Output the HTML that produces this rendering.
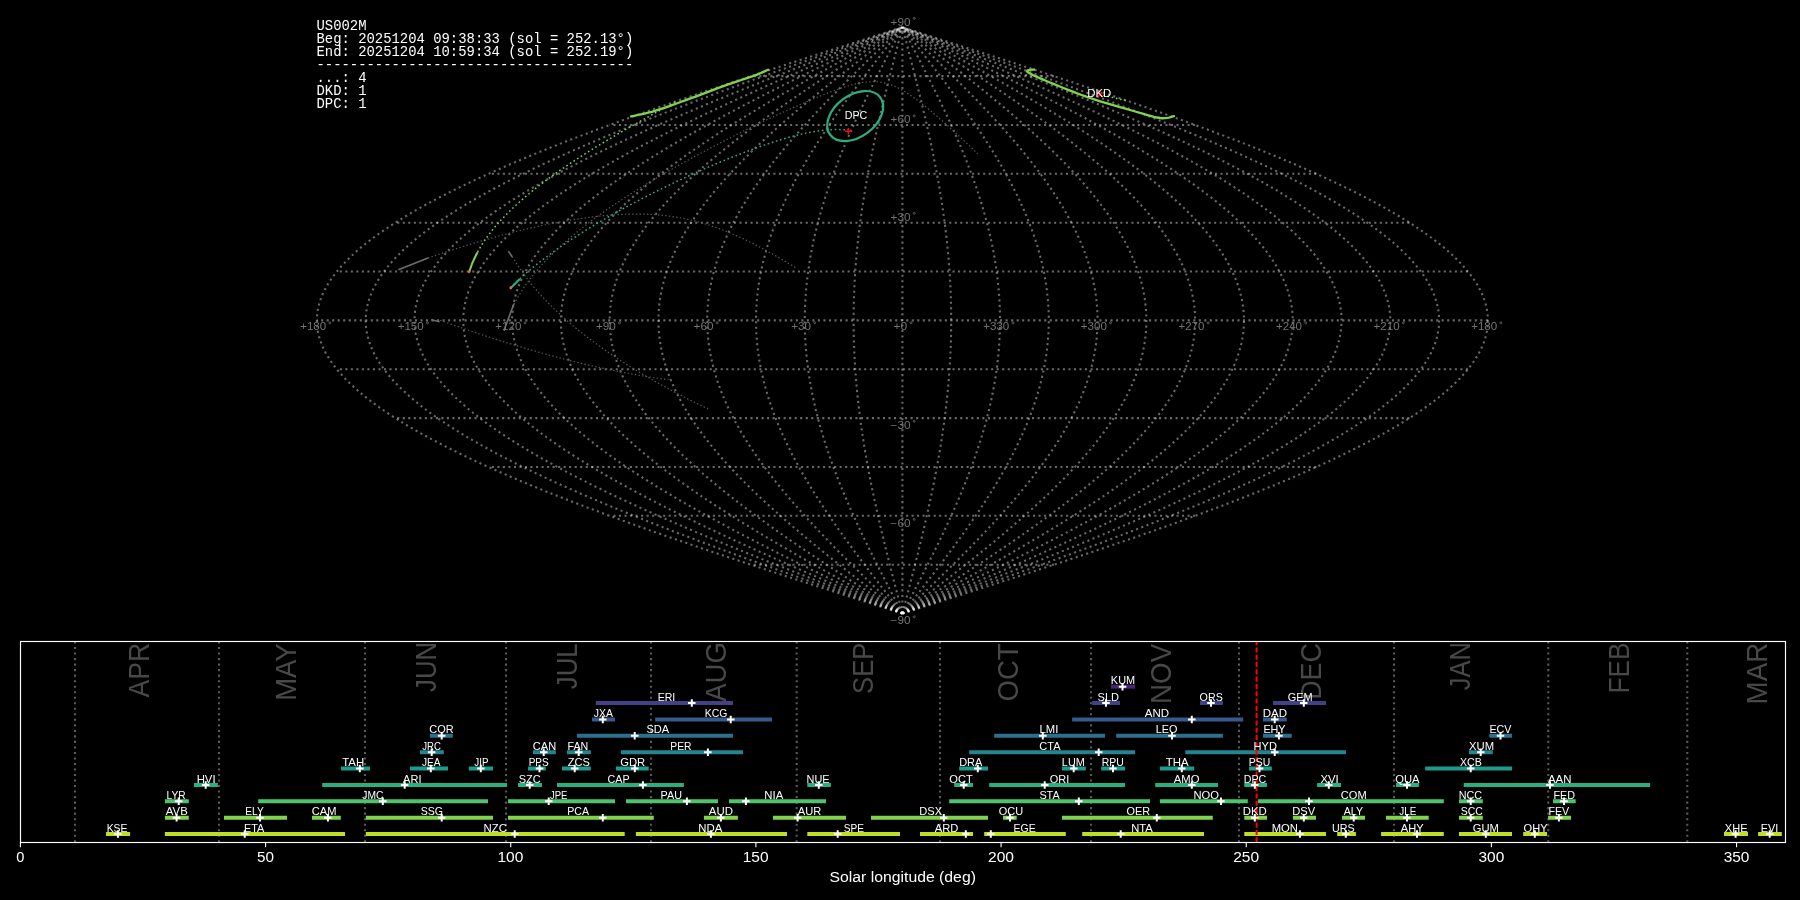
<!DOCTYPE html><html><head><meta charset="utf-8"><style>html,body{margin:0;padding:0;background:#000;width:1800px;height:900px;overflow:hidden}svg{display:block;will-change:transform}text{font-family:"Liberation Sans",sans-serif}</style></head><body>
<svg width="1800" height="900" viewBox="0 0 1800 900">
<rect width="1800" height="900" fill="#000"/>
<g fill="none" stroke="#fff" stroke-opacity="0.41" stroke-width="2.08" stroke-dasharray="2.08 3.44"><path d="M902.4 613.53L912.62 610.27L922.83 607.02L933.04 603.76L943.24 600.5L953.43 597.25L963.6 593.99L973.75 590.73L983.89 587.47L993.99 584.22L1004.07 580.96L1014.12 577.7L1024.13 574.45L1034.11 571.19L1044.05 567.93L1053.94 564.67L1063.79 561.42L1073.58 558.16L1083.33 554.9L1093.02 551.65L1102.65 548.39L1112.23 545.13L1121.73 541.88L1131.17 538.62L1140.55 535.36L1149.84 532.11L1159.07 528.85L1168.21 525.59L1177.28 522.33L1186.26 519.08L1195.15 515.82L1203.96 512.56L1212.67 509.31L1221.29 506.05L1229.81 502.79L1238.23 499.53L1246.55 496.28L1254.77 493.02L1262.87 489.76L1270.87 486.51L1278.75 483.25L1286.53 479.99L1294.18 476.74L1301.71 473.48L1309.13 470.22L1316.41 466.96L1323.58 463.71L1330.61 460.45L1337.51 457.19L1344.29 453.94L1350.92 450.68L1357.42 447.42L1363.78 444.17L1370 440.91L1376.08 437.65L1382.02 434.39L1387.8 431.14L1393.44 427.88L1398.94 424.62L1404.27 421.37L1409.46 418.11L1414.49 414.85L1419.37 411.6L1424.09 408.34L1428.65 405.08L1433.05 401.82L1437.28 398.57L1441.36 395.31L1445.27 392.05L1449.02 388.8L1452.59 385.54L1456 382.28L1459.25 379.03L1462.32 375.77L1465.22 372.51L1467.95 369.25L1470.51 366L1472.9 362.74L1475.11 359.48L1477.15 356.23L1479.01 352.97L1480.7 349.71L1482.21 346.46L1483.54 343.2L1484.7 339.94L1485.68 336.69L1486.48 333.43L1487.1 330.17L1487.55 326.91L1487.81 323.66L1487.9 320.4L1487.81 317.14L1487.55 313.89L1487.1 310.63L1486.48 307.37L1485.68 304.11L1484.7 300.86L1483.54 297.6L1482.21 294.34L1480.7 291.09L1479.01 287.83L1477.15 284.57L1475.11 281.32L1472.9 278.06L1470.51 274.8L1467.95 271.54L1465.22 268.29L1462.32 265.03L1459.25 261.77L1456 258.52L1452.59 255.26L1449.02 252L1445.27 248.75L1441.36 245.49L1437.28 242.23L1433.05 238.97L1428.65 235.72L1424.09 232.46L1419.37 229.2L1414.49 225.95L1409.46 222.69L1404.27 219.43L1398.94 216.18L1393.44 212.92L1387.8 209.66L1382.02 206.4L1376.08 203.15L1370 199.89L1363.78 196.63L1357.42 193.38L1350.92 190.12L1344.29 186.86L1337.51 183.61L1330.61 180.35L1323.58 177.09L1316.41 173.83L1309.13 170.58L1301.71 167.32L1294.18 164.06L1286.53 160.81L1278.75 157.55L1270.87 154.29L1262.87 151.04L1254.77 147.78L1246.55 144.52L1238.23 141.26L1229.81 138.01L1221.29 134.75L1212.67 131.49L1203.96 128.24L1195.15 124.98L1186.26 121.72L1177.28 118.47L1168.21 115.21L1159.07 111.95L1149.84 108.69L1140.55 105.44L1131.17 102.18L1121.73 98.92L1112.23 95.67L1102.65 92.41L1093.02 89.15L1083.33 85.9L1073.58 82.64L1063.79 79.38L1053.94 76.12L1044.05 72.87L1034.11 69.61L1024.13 66.35L1014.12 63.1L1004.07 59.84L993.99 56.58L983.89 53.33L973.75 50.07L963.6 46.81L953.43 43.55L943.24 40.3L933.04 37.04L922.83 33.78L912.62 30.53L902.4 27.27"/><path d="M902.4 613.53L911.77 610.27L921.13 607.02L930.49 603.76L939.84 600.5L949.18 597.25L958.5 593.99L967.81 590.73L977.1 587.47L986.36 584.22L995.6 580.96L1004.81 577.7L1013.99 574.45L1023.13 571.19L1032.24 567.93L1041.31 564.67L1050.34 561.42L1059.32 558.16L1068.25 554.9L1077.14 551.65L1085.97 548.39L1094.74 545.13L1103.46 541.88L1112.11 538.62L1120.7 535.36L1129.22 532.11L1137.68 528.85L1146.06 525.59L1154.37 522.33L1162.6 519.08L1170.76 515.82L1178.83 512.56L1186.81 509.31L1194.71 506.05L1202.53 502.79L1210.25 499.53L1217.87 496.28L1225.4 493.02L1232.83 489.76L1240.16 486.51L1247.39 483.25L1254.51 479.99L1261.53 476.74L1268.44 473.48L1275.23 470.22L1281.91 466.96L1288.48 463.71L1294.93 460.45L1301.25 457.19L1307.46 453.94L1313.55 450.68L1319.5 447.42L1325.33 444.17L1331.04 440.91L1336.61 437.65L1342.05 434.39L1347.35 431.14L1352.52 427.88L1357.56 424.62L1362.45 421.37L1367.21 418.11L1371.82 414.85L1376.29 411.6L1380.61 408.34L1384.79 405.08L1388.83 401.82L1392.71 398.57L1396.45 395.31L1400.03 392.05L1403.46 388.8L1406.74 385.54L1409.87 382.28L1412.84 379.03L1415.66 375.77L1418.32 372.51L1420.82 369.25L1423.17 366L1425.36 362.74L1427.38 359.48L1429.25 356.23L1430.96 352.97L1432.5 349.71L1433.89 346.46L1435.11 343.2L1436.17 339.94L1437.07 336.69L1437.8 333.43L1438.38 330.17L1438.79 326.91L1439.03 323.66L1439.11 320.4L1439.03 317.14L1438.79 313.89L1438.38 310.63L1437.8 307.37L1437.07 304.11L1436.17 300.86L1435.11 297.6L1433.89 294.34L1432.5 291.09L1430.96 287.83L1429.25 284.57L1427.38 281.32L1425.36 278.06L1423.17 274.8L1420.82 271.54L1418.32 268.29L1415.66 265.03L1412.84 261.77L1409.87 258.52L1406.74 255.26L1403.46 252L1400.03 248.75L1396.45 245.49L1392.71 242.23L1388.83 238.97L1384.79 235.72L1380.61 232.46L1376.29 229.2L1371.82 225.95L1367.21 222.69L1362.45 219.43L1357.56 216.18L1352.52 212.92L1347.35 209.66L1342.05 206.4L1336.61 203.15L1331.04 199.89L1325.33 196.63L1319.5 193.38L1313.55 190.12L1307.46 186.86L1301.25 183.61L1294.93 180.35L1288.48 177.09L1281.91 173.83L1275.23 170.58L1268.44 167.32L1261.53 164.06L1254.51 160.81L1247.39 157.55L1240.16 154.29L1232.83 151.04L1225.4 147.78L1217.87 144.52L1210.25 141.26L1202.53 138.01L1194.71 134.75L1186.81 131.49L1178.83 128.24L1170.76 124.98L1162.6 121.72L1154.37 118.47L1146.06 115.21L1137.68 111.95L1129.22 108.69L1120.7 105.44L1112.11 102.18L1103.46 98.92L1094.74 95.67L1085.97 92.41L1077.14 89.15L1068.25 85.9L1059.32 82.64L1050.34 79.38L1041.31 76.12L1032.24 72.87L1023.13 69.61L1013.99 66.35L1004.81 63.1L995.6 59.84L986.36 56.58L977.1 53.33L967.81 50.07L958.5 46.81L949.18 43.55L939.84 40.3L930.49 37.04L921.13 33.78L911.77 30.53L902.4 27.27"/><path d="M902.4 613.53L910.92 610.27L919.43 607.02L927.94 603.76L936.44 600.5L944.93 597.25L953.4 593.99L961.86 590.73L970.31 587.47L978.73 584.22L987.13 580.96L995.5 577.7L1003.84 574.45L1012.16 571.19L1020.44 567.93L1028.68 564.67L1036.89 561.42L1045.05 558.16L1053.18 554.9L1061.25 551.65L1069.28 548.39L1077.25 545.13L1085.18 541.88L1093.05 538.62L1100.85 535.36L1108.6 532.11L1116.29 528.85L1123.91 525.59L1131.46 522.33L1138.95 519.08L1146.36 515.82L1153.7 512.56L1160.96 509.31L1168.14 506.05L1175.24 502.79L1182.26 499.53L1189.19 496.28L1196.04 493.02L1202.79 489.76L1209.46 486.51L1216.03 483.25L1222.5 479.99L1228.88 476.74L1235.16 473.48L1241.34 470.22L1247.41 466.96L1253.38 463.71L1259.24 460.45L1265 457.19L1270.64 453.94L1276.17 450.68L1281.59 447.42L1286.89 444.17L1292.07 440.91L1297.14 437.65L1302.08 434.39L1306.9 431.14L1311.6 427.88L1316.18 424.62L1320.63 421.37L1324.95 418.11L1329.14 414.85L1333.21 411.6L1337.14 408.34L1340.94 405.08L1344.61 401.82L1348.14 398.57L1351.53 395.31L1354.79 392.05L1357.91 388.8L1360.89 385.54L1363.74 382.28L1366.44 379.03L1369 375.77L1371.42 372.51L1373.69 369.25L1375.83 366L1377.81 362.74L1379.66 359.48L1381.36 356.23L1382.91 352.97L1384.31 349.71L1385.57 346.46L1386.68 343.2L1387.65 339.94L1388.46 336.69L1389.13 333.43L1389.65 330.17L1390.02 326.91L1390.25 323.66L1390.32 320.4L1390.25 317.14L1390.02 313.89L1389.65 310.63L1389.13 307.37L1388.46 304.11L1387.65 300.86L1386.68 297.6L1385.57 294.34L1384.31 291.09L1382.91 287.83L1381.36 284.57L1379.66 281.32L1377.81 278.06L1375.83 274.8L1373.69 271.54L1371.42 268.29L1369 265.03L1366.44 261.77L1363.74 258.52L1360.89 255.26L1357.91 252L1354.79 248.75L1351.53 245.49L1348.14 242.23L1344.61 238.97L1340.94 235.72L1337.14 232.46L1333.21 229.2L1329.14 225.95L1324.95 222.69L1320.63 219.43L1316.18 216.18L1311.6 212.92L1306.9 209.66L1302.08 206.4L1297.14 203.15L1292.07 199.89L1286.89 196.63L1281.59 193.38L1276.17 190.12L1270.64 186.86L1265 183.61L1259.24 180.35L1253.38 177.09L1247.41 173.83L1241.34 170.58L1235.16 167.32L1228.88 164.06L1222.5 160.81L1216.03 157.55L1209.46 154.29L1202.79 151.04L1196.04 147.78L1189.19 144.52L1182.26 141.26L1175.24 138.01L1168.14 134.75L1160.96 131.49L1153.7 128.24L1146.36 124.98L1138.95 121.72L1131.46 118.47L1123.91 115.21L1116.29 111.95L1108.6 108.69L1100.85 105.44L1093.05 102.18L1085.18 98.92L1077.25 95.67L1069.28 92.41L1061.25 89.15L1053.18 85.9L1045.05 82.64L1036.89 79.38L1028.68 76.12L1020.44 72.87L1012.16 69.61L1003.84 66.35L995.5 63.1L987.13 59.84L978.73 56.58L970.31 53.33L961.86 50.07L953.4 46.81L944.93 43.55L936.44 40.3L927.94 37.04L919.43 33.78L910.92 30.53L902.4 27.27"/><path d="M902.4 613.53L910.06 610.27L917.73 607.02L925.38 603.76L933.03 600.5L940.67 597.25L948.3 593.99L955.92 590.73L963.51 587.47L971.09 584.22L978.65 580.96L986.19 577.7L993.7 574.45L1001.18 571.19L1008.63 567.93L1016.05 564.67L1023.44 561.42L1030.79 558.16L1038.1 554.9L1045.37 551.65L1052.59 548.39L1059.77 545.13L1066.9 541.88L1073.98 538.62L1081.01 535.36L1087.98 532.11L1094.9 528.85L1101.76 525.59L1108.56 522.33L1115.29 519.08L1121.96 515.82L1128.57 512.56L1135.1 509.31L1141.57 506.05L1147.96 502.79L1154.27 499.53L1160.51 496.28L1166.67 493.02L1172.75 489.76L1178.75 486.51L1184.67 483.25L1190.49 479.99L1196.23 476.74L1201.88 473.48L1207.44 470.22L1212.91 466.96L1218.28 463.71L1223.56 460.45L1228.74 457.19L1233.81 453.94L1238.79 450.68L1243.67 447.42L1248.44 444.17L1253.1 440.91L1257.66 437.65L1262.11 434.39L1266.45 431.14L1270.68 427.88L1274.8 424.62L1278.81 421.37L1282.7 418.11L1286.47 414.85L1290.13 411.6L1293.67 408.34L1297.09 405.08L1300.39 401.82L1303.56 398.57L1306.62 395.31L1309.55 392.05L1312.36 388.8L1315.05 385.54L1317.6 382.28L1320.04 379.03L1322.34 375.77L1324.52 372.51L1326.57 369.25L1328.48 366L1330.27 362.74L1331.93 359.48L1333.46 356.23L1334.86 352.97L1336.12 349.71L1337.25 346.46L1338.25 343.2L1339.12 339.94L1339.86 336.69L1340.46 333.43L1340.93 330.17L1341.26 326.91L1341.46 323.66L1341.53 320.4L1341.46 317.14L1341.26 313.89L1340.93 310.63L1340.46 307.37L1339.86 304.11L1339.12 300.86L1338.25 297.6L1337.25 294.34L1336.12 291.09L1334.86 287.83L1333.46 284.57L1331.93 281.32L1330.27 278.06L1328.48 274.8L1326.57 271.54L1324.52 268.29L1322.34 265.03L1320.04 261.77L1317.6 258.52L1315.05 255.26L1312.36 252L1309.55 248.75L1306.62 245.49L1303.56 242.23L1300.39 238.97L1297.09 235.72L1293.67 232.46L1290.13 229.2L1286.47 225.95L1282.7 222.69L1278.81 219.43L1274.8 216.18L1270.68 212.92L1266.45 209.66L1262.11 206.4L1257.66 203.15L1253.1 199.89L1248.44 196.63L1243.67 193.38L1238.79 190.12L1233.81 186.86L1228.74 183.61L1223.56 180.35L1218.28 177.09L1212.91 173.83L1207.44 170.58L1201.88 167.32L1196.23 164.06L1190.49 160.81L1184.67 157.55L1178.75 154.29L1172.75 151.04L1166.67 147.78L1160.51 144.52L1154.27 141.26L1147.96 138.01L1141.57 134.75L1135.1 131.49L1128.57 128.24L1121.96 124.98L1115.29 121.72L1108.56 118.47L1101.76 115.21L1094.9 111.95L1087.98 108.69L1081.01 105.44L1073.98 102.18L1066.9 98.92L1059.77 95.67L1052.59 92.41L1045.37 89.15L1038.1 85.9L1030.79 82.64L1023.44 79.38L1016.05 76.12L1008.63 72.87L1001.18 69.61L993.7 66.35L986.19 63.1L978.65 59.84L971.09 56.58L963.51 53.33L955.92 50.07L948.3 46.81L940.67 43.55L933.03 40.3L925.38 37.04L917.73 33.78L910.06 30.53L902.4 27.27"/><path d="M902.4 613.53L909.21 610.27L916.02 607.02L922.83 603.76L929.63 600.5L936.42 597.25L943.2 593.99L949.97 590.73L956.72 587.47L963.46 584.22L970.18 580.96L976.88 577.7L983.56 574.45L990.21 571.19L996.83 567.93L1003.43 564.67L1009.99 561.42L1016.52 558.16L1023.02 554.9L1029.48 551.65L1035.9 548.39L1042.28 545.13L1048.62 541.88L1054.92 538.62L1061.16 535.36L1067.36 532.11L1073.51 528.85L1079.61 525.59L1085.65 522.33L1091.64 519.08L1097.57 515.82L1103.44 512.56L1109.25 509.31L1114.99 506.05L1120.67 502.79L1126.29 499.53L1131.83 496.28L1137.31 493.02L1142.71 489.76L1148.05 486.51L1153.3 483.25L1158.48 479.99L1163.59 476.74L1168.61 473.48L1173.55 470.22L1178.41 466.96L1183.18 463.71L1187.87 460.45L1192.48 457.19L1196.99 453.94L1201.41 450.68L1205.75 447.42L1209.99 444.17L1214.14 440.91L1218.19 437.65L1222.14 434.39L1226 431.14L1229.76 427.88L1233.42 424.62L1236.98 421.37L1240.44 418.11L1243.8 414.85L1247.05 411.6L1250.19 408.34L1253.23 405.08L1256.16 401.82L1258.99 398.57L1261.71 395.31L1264.31 392.05L1266.81 388.8L1269.2 385.54L1271.47 382.28L1273.63 379.03L1275.68 375.77L1277.62 372.51L1279.44 369.25L1281.14 366L1282.73 362.74L1284.21 359.48L1285.56 356.23L1286.81 352.97L1287.93 349.71L1288.94 346.46L1289.83 343.2L1290.6 339.94L1291.25 336.69L1291.79 333.43L1292.2 330.17L1292.5 326.91L1292.68 323.66L1292.74 320.4L1292.68 317.14L1292.5 313.89L1292.2 310.63L1291.79 307.37L1291.25 304.11L1290.6 300.86L1289.83 297.6L1288.94 294.34L1287.93 291.09L1286.81 287.83L1285.56 284.57L1284.21 281.32L1282.73 278.06L1281.14 274.8L1279.44 271.54L1277.62 268.29L1275.68 265.03L1273.63 261.77L1271.47 258.52L1269.2 255.26L1266.81 252L1264.31 248.75L1261.71 245.49L1258.99 242.23L1256.16 238.97L1253.23 235.72L1250.19 232.46L1247.05 229.2L1243.8 225.95L1240.44 222.69L1236.98 219.43L1233.42 216.18L1229.76 212.92L1226 209.66L1222.14 206.4L1218.19 203.15L1214.14 199.89L1209.99 196.63L1205.75 193.38L1201.41 190.12L1196.99 186.86L1192.48 183.61L1187.87 180.35L1183.18 177.09L1178.41 173.83L1173.55 170.58L1168.61 167.32L1163.59 164.06L1158.48 160.81L1153.3 157.55L1148.05 154.29L1142.71 151.04L1137.31 147.78L1131.83 144.52L1126.29 141.26L1120.67 138.01L1114.99 134.75L1109.25 131.49L1103.44 128.24L1097.57 124.98L1091.64 121.72L1085.65 118.47L1079.61 115.21L1073.51 111.95L1067.36 108.69L1061.16 105.44L1054.92 102.18L1048.62 98.92L1042.28 95.67L1035.9 92.41L1029.48 89.15L1023.02 85.9L1016.52 82.64L1009.99 79.38L1003.43 76.12L996.83 72.87L990.21 69.61L983.56 66.35L976.88 63.1L970.18 59.84L963.46 56.58L956.72 53.33L949.97 50.07L943.2 46.81L936.42 43.55L929.63 40.3L922.83 37.04L916.02 33.78L909.21 30.53L902.4 27.27"/><path d="M902.4 613.53L908.36 610.27L914.32 607.02L920.28 603.76L926.22 600.5L932.17 597.25L938.1 593.99L944.02 590.73L949.93 587.47L955.83 584.22L961.71 580.96L967.57 577.7L973.41 574.45L979.23 571.19L985.03 567.93L990.8 564.67L996.54 561.42L1002.26 558.16L1007.94 554.9L1013.6 551.65L1019.21 548.39L1024.8 545.13L1030.34 541.88L1035.85 538.62L1041.32 535.36L1046.74 532.11L1052.12 528.85L1057.46 525.59L1062.75 522.33L1067.98 519.08L1073.17 515.82L1078.31 512.56L1083.39 509.31L1088.42 506.05L1093.39 502.79L1098.3 499.53L1103.15 496.28L1107.95 493.02L1112.68 489.76L1117.34 486.51L1121.94 483.25L1126.47 479.99L1130.94 476.74L1135.33 473.48L1139.66 470.22L1143.91 466.96L1148.09 463.71L1152.19 460.45L1156.22 457.19L1160.17 453.94L1164.04 450.68L1167.83 447.42L1171.54 444.17L1175.17 440.91L1178.71 437.65L1182.18 434.39L1185.55 431.14L1188.84 427.88L1192.05 424.62L1195.16 421.37L1198.19 418.11L1201.12 414.85L1203.97 411.6L1206.72 408.34L1209.38 405.08L1211.94 401.82L1214.42 398.57L1216.79 395.31L1219.07 392.05L1221.26 388.8L1223.35 385.54L1225.34 382.28L1227.23 379.03L1229.02 375.77L1230.71 372.51L1232.31 369.25L1233.8 366L1235.19 362.74L1236.48 359.48L1237.67 356.23L1238.76 352.97L1239.74 349.71L1240.62 346.46L1241.4 343.2L1242.07 339.94L1242.64 336.69L1243.11 333.43L1243.48 330.17L1243.74 326.91L1243.89 323.66L1243.94 320.4L1243.89 317.14L1243.74 313.89L1243.48 310.63L1243.11 307.37L1242.64 304.11L1242.07 300.86L1241.4 297.6L1240.62 294.34L1239.74 291.09L1238.76 287.83L1237.67 284.57L1236.48 281.32L1235.19 278.06L1233.8 274.8L1232.31 271.54L1230.71 268.29L1229.02 265.03L1227.23 261.77L1225.34 258.52L1223.35 255.26L1221.26 252L1219.07 248.75L1216.79 245.49L1214.42 242.23L1211.94 238.97L1209.38 235.72L1206.72 232.46L1203.97 229.2L1201.12 225.95L1198.19 222.69L1195.16 219.43L1192.05 216.18L1188.84 212.92L1185.55 209.66L1182.18 206.4L1178.71 203.15L1175.17 199.89L1171.54 196.63L1167.83 193.38L1164.04 190.12L1160.17 186.86L1156.22 183.61L1152.19 180.35L1148.09 177.09L1143.91 173.83L1139.66 170.58L1135.33 167.32L1130.94 164.06L1126.47 160.81L1121.94 157.55L1117.34 154.29L1112.68 151.04L1107.95 147.78L1103.15 144.52L1098.3 141.26L1093.39 138.01L1088.42 134.75L1083.39 131.49L1078.31 128.24L1073.17 124.98L1067.98 121.72L1062.75 118.47L1057.46 115.21L1052.12 111.95L1046.74 108.69L1041.32 105.44L1035.85 102.18L1030.34 98.92L1024.8 95.67L1019.21 92.41L1013.6 89.15L1007.94 85.9L1002.26 82.64L996.54 79.38L990.8 76.12L985.03 72.87L979.23 69.61L973.41 66.35L967.57 63.1L961.71 59.84L955.83 56.58L949.93 53.33L944.02 50.07L938.1 46.81L932.17 43.55L926.22 40.3L920.28 37.04L914.32 33.78L908.36 30.53L902.4 27.27"/><path d="M902.4 613.53L907.51 610.27L912.62 607.02L917.72 603.76L922.82 600.5L927.92 597.25L933 593.99L938.08 590.73L943.14 587.47L948.2 584.22L953.24 580.96L958.26 577.7L963.27 574.45L968.25 571.19L973.22 567.93L978.17 564.67L983.09 561.42L987.99 558.16L992.87 554.9L997.71 551.65L1002.53 548.39L1007.31 545.13L1012.07 541.88L1016.79 538.62L1021.47 535.36L1026.12 532.11L1030.73 528.85L1035.31 525.59L1039.84 522.33L1044.33 519.08L1048.78 515.82L1053.18 512.56L1057.53 509.31L1061.84 506.05L1066.1 502.79L1070.32 499.53L1074.48 496.28L1078.58 493.02L1082.64 489.76L1086.63 486.51L1090.58 483.25L1094.46 479.99L1098.29 476.74L1102.06 473.48L1105.76 470.22L1109.41 466.96L1112.99 463.71L1116.51 460.45L1119.96 457.19L1123.34 453.94L1126.66 450.68L1129.91 447.42L1133.09 444.17L1136.2 440.91L1139.24 437.65L1142.21 434.39L1145.1 431.14L1147.92 427.88L1150.67 424.62L1153.34 421.37L1155.93 418.11L1158.45 414.85L1160.88 411.6L1163.24 408.34L1165.52 405.08L1167.72 401.82L1169.84 398.57L1171.88 395.31L1173.83 392.05L1175.71 388.8L1177.5 385.54L1179.2 382.28L1180.82 379.03L1182.36 375.77L1183.81 372.51L1185.18 369.25L1186.46 366L1187.65 362.74L1188.75 359.48L1189.77 356.23L1190.7 352.97L1191.55 349.71L1192.3 346.46L1192.97 343.2L1193.55 339.94L1194.04 336.69L1194.44 333.43L1194.75 330.17L1194.97 326.91L1195.11 323.66L1195.15 320.4L1195.11 317.14L1194.97 313.89L1194.75 310.63L1194.44 307.37L1194.04 304.11L1193.55 300.86L1192.97 297.6L1192.3 294.34L1191.55 291.09L1190.7 287.83L1189.77 284.57L1188.75 281.32L1187.65 278.06L1186.46 274.8L1185.18 271.54L1183.81 268.29L1182.36 265.03L1180.82 261.77L1179.2 258.52L1177.5 255.26L1175.71 252L1173.83 248.75L1171.88 245.49L1169.84 242.23L1167.72 238.97L1165.52 235.72L1163.24 232.46L1160.88 229.2L1158.45 225.95L1155.93 222.69L1153.34 219.43L1150.67 216.18L1147.92 212.92L1145.1 209.66L1142.21 206.4L1139.24 203.15L1136.2 199.89L1133.09 196.63L1129.91 193.38L1126.66 190.12L1123.34 186.86L1119.96 183.61L1116.51 180.35L1112.99 177.09L1109.41 173.83L1105.76 170.58L1102.06 167.32L1098.29 164.06L1094.46 160.81L1090.58 157.55L1086.63 154.29L1082.64 151.04L1078.58 147.78L1074.48 144.52L1070.32 141.26L1066.1 138.01L1061.84 134.75L1057.53 131.49L1053.18 128.24L1048.78 124.98L1044.33 121.72L1039.84 118.47L1035.31 115.21L1030.73 111.95L1026.12 108.69L1021.47 105.44L1016.79 102.18L1012.07 98.92L1007.31 95.67L1002.53 92.41L997.71 89.15L992.87 85.9L987.99 82.64L983.09 79.38L978.17 76.12L973.22 72.87L968.25 69.61L963.27 66.35L958.26 63.1L953.24 59.84L948.2 56.58L943.14 53.33L938.08 50.07L933 46.81L927.92 43.55L922.82 40.3L917.72 37.04L912.62 33.78L907.51 30.53L902.4 27.27"/><path d="M902.4 613.53L906.66 610.27L910.91 607.02L915.17 603.76L919.42 600.5L923.66 597.25L927.9 593.99L932.13 590.73L936.35 587.47L940.56 584.22L944.76 580.96L948.95 577.7L953.12 574.45L957.28 571.19L961.42 567.93L965.54 564.67L969.64 561.42L973.73 558.16L977.79 554.9L981.83 551.65L985.84 548.39L989.83 545.13L993.79 541.88L997.72 538.62L1001.63 535.36L1005.5 532.11L1009.35 528.85L1013.16 525.59L1016.93 522.33L1020.67 519.08L1024.38 515.82L1028.05 512.56L1031.68 509.31L1035.27 506.05L1038.82 502.79L1042.33 499.53L1045.8 496.28L1049.22 493.02L1052.6 489.76L1055.93 486.51L1059.21 483.25L1062.45 479.99L1065.64 476.74L1068.78 473.48L1071.87 470.22L1074.91 466.96L1077.89 463.71L1080.82 460.45L1083.7 457.19L1086.52 453.94L1089.28 450.68L1091.99 447.42L1094.64 444.17L1097.24 440.91L1099.77 437.65L1102.24 434.39L1104.65 431.14L1107 427.88L1109.29 424.62L1111.51 421.37L1113.68 418.11L1115.77 414.85L1117.8 411.6L1119.77 408.34L1121.67 405.08L1123.5 401.82L1125.27 398.57L1126.97 395.31L1128.6 392.05L1130.16 388.8L1131.65 385.54L1133.07 382.28L1134.42 379.03L1135.7 375.77L1136.91 372.51L1138.05 369.25L1139.11 366L1140.11 362.74L1141.03 359.48L1141.88 356.23L1142.65 352.97L1143.36 349.71L1143.99 346.46L1144.54 343.2L1145.02 339.94L1145.43 336.69L1145.77 333.43L1146.03 330.17L1146.21 326.91L1146.32 323.66L1146.36 320.4L1146.32 317.14L1146.21 313.89L1146.03 310.63L1145.77 307.37L1145.43 304.11L1145.02 300.86L1144.54 297.6L1143.99 294.34L1143.36 291.09L1142.65 287.83L1141.88 284.57L1141.03 281.32L1140.11 278.06L1139.11 274.8L1138.05 271.54L1136.91 268.29L1135.7 265.03L1134.42 261.77L1133.07 258.52L1131.65 255.26L1130.16 252L1128.6 248.75L1126.97 245.49L1125.27 242.23L1123.5 238.97L1121.67 235.72L1119.77 232.46L1117.8 229.2L1115.77 225.95L1113.68 222.69L1111.51 219.43L1109.29 216.18L1107 212.92L1104.65 209.66L1102.24 206.4L1099.77 203.15L1097.24 199.89L1094.64 196.63L1091.99 193.38L1089.28 190.12L1086.52 186.86L1083.7 183.61L1080.82 180.35L1077.89 177.09L1074.91 173.83L1071.87 170.58L1068.78 167.32L1065.64 164.06L1062.45 160.81L1059.21 157.55L1055.93 154.29L1052.6 151.04L1049.22 147.78L1045.8 144.52L1042.33 141.26L1038.82 138.01L1035.27 134.75L1031.68 131.49L1028.05 128.24L1024.38 124.98L1020.67 121.72L1016.93 118.47L1013.16 115.21L1009.35 111.95L1005.5 108.69L1001.63 105.44L997.72 102.18L993.79 98.92L989.83 95.67L985.84 92.41L981.83 89.15L977.79 85.9L973.73 82.64L969.64 79.38L965.54 76.12L961.42 72.87L957.28 69.61L953.12 66.35L948.95 63.1L944.76 59.84L940.56 56.58L936.35 53.33L932.13 50.07L927.9 46.81L923.66 43.55L919.42 40.3L915.17 37.04L910.91 33.78L906.66 30.53L902.4 27.27"/><path d="M902.4 613.53L905.81 610.27L909.21 607.02L912.61 603.76L916.01 600.5L919.41 597.25L922.8 593.99L926.18 590.73L929.56 587.47L932.93 584.22L936.29 580.96L939.64 577.7L942.98 574.45L946.3 571.19L949.62 567.93L952.91 564.67L956.2 561.42L959.46 558.16L962.71 554.9L965.94 551.65L969.15 548.39L972.34 545.13L975.51 541.88L978.66 538.62L981.78 535.36L984.88 532.11L987.96 528.85L991 525.59L994.03 522.33L997.02 519.08L999.98 515.82L1002.92 512.56L1005.82 509.31L1008.7 506.05L1011.54 502.79L1014.34 499.53L1017.12 496.28L1019.86 493.02L1022.56 489.76L1025.22 486.51L1027.85 483.25L1030.44 479.99L1032.99 476.74L1035.5 473.48L1037.98 470.22L1040.4 466.96L1042.79 463.71L1045.14 460.45L1047.44 457.19L1049.7 453.94L1051.91 450.68L1054.07 447.42L1056.19 444.17L1058.27 440.91L1060.29 437.65L1062.27 434.39L1064.2 431.14L1066.08 427.88L1067.91 424.62L1069.69 421.37L1071.42 418.11L1073.1 414.85L1074.72 411.6L1076.3 408.34L1077.82 405.08L1079.28 401.82L1080.69 398.57L1082.05 395.31L1083.36 392.05L1084.61 388.8L1085.8 385.54L1086.93 382.28L1088.02 379.03L1089.04 375.77L1090.01 372.51L1090.92 369.25L1091.77 366L1092.57 362.74L1093.3 359.48L1093.98 356.23L1094.6 352.97L1095.17 349.71L1095.67 346.46L1096.11 343.2L1096.5 339.94L1096.83 336.69L1097.09 333.43L1097.3 330.17L1097.45 326.91L1097.54 323.66L1097.57 320.4L1097.54 317.14L1097.45 313.89L1097.3 310.63L1097.09 307.37L1096.83 304.11L1096.5 300.86L1096.11 297.6L1095.67 294.34L1095.17 291.09L1094.6 287.83L1093.98 284.57L1093.3 281.32L1092.57 278.06L1091.77 274.8L1090.92 271.54L1090.01 268.29L1089.04 265.03L1088.02 261.77L1086.93 258.52L1085.8 255.26L1084.61 252L1083.36 248.75L1082.05 245.49L1080.69 242.23L1079.28 238.97L1077.82 235.72L1076.3 232.46L1074.72 229.2L1073.1 225.95L1071.42 222.69L1069.69 219.43L1067.91 216.18L1066.08 212.92L1064.2 209.66L1062.27 206.4L1060.29 203.15L1058.27 199.89L1056.19 196.63L1054.07 193.38L1051.91 190.12L1049.7 186.86L1047.44 183.61L1045.14 180.35L1042.79 177.09L1040.4 173.83L1037.98 170.58L1035.5 167.32L1032.99 164.06L1030.44 160.81L1027.85 157.55L1025.22 154.29L1022.56 151.04L1019.86 147.78L1017.12 144.52L1014.34 141.26L1011.54 138.01L1008.7 134.75L1005.82 131.49L1002.92 128.24L999.98 124.98L997.02 121.72L994.03 118.47L991 115.21L987.96 111.95L984.88 108.69L981.78 105.44L978.66 102.18L975.51 98.92L972.34 95.67L969.15 92.41L965.94 89.15L962.71 85.9L959.46 82.64L956.2 79.38L952.91 76.12L949.62 72.87L946.3 69.61L942.98 66.35L939.64 63.1L936.29 59.84L932.93 56.58L929.56 53.33L926.18 50.07L922.8 46.81L919.41 43.55L916.01 40.3L912.61 37.04L909.21 33.78L905.81 30.53L902.4 27.27"/><path d="M902.4 613.53L904.95 610.27L907.51 607.02L910.06 603.76L912.61 600.5L915.16 597.25L917.7 593.99L920.24 590.73L922.77 587.47L925.3 584.22L927.82 580.96L930.33 577.7L932.83 574.45L935.33 571.19L937.81 567.93L940.28 564.67L942.75 561.42L945.2 558.16L947.63 554.9L950.06 551.65L952.46 548.39L954.86 545.13L957.23 541.88L959.59 538.62L961.94 535.36L964.26 532.11L966.57 528.85L968.85 525.59L971.12 522.33L973.36 519.08L975.59 515.82L977.79 512.56L979.97 509.31L982.12 506.05L984.25 502.79L986.36 499.53L988.44 496.28L990.49 493.02L992.52 489.76L994.52 486.51L996.49 483.25L998.43 479.99L1000.34 476.74L1002.23 473.48L1004.08 470.22L1005.9 466.96L1007.69 463.71L1009.45 460.45L1011.18 457.19L1012.87 453.94L1014.53 450.68L1016.16 447.42L1017.75 444.17L1019.3 440.91L1020.82 437.65L1022.3 434.39L1023.75 431.14L1025.16 427.88L1026.53 424.62L1027.87 421.37L1029.17 418.11L1030.42 414.85L1031.64 411.6L1032.82 408.34L1033.96 405.08L1035.06 401.82L1036.12 398.57L1037.14 395.31L1038.12 392.05L1039.05 388.8L1039.95 385.54L1040.8 382.28L1041.61 379.03L1042.38 375.77L1043.11 372.51L1043.79 369.25L1044.43 366L1045.02 362.74L1045.58 359.48L1046.09 356.23L1046.55 352.97L1046.97 349.71L1047.35 346.46L1047.68 343.2L1047.97 339.94L1048.22 336.69L1048.42 333.43L1048.58 330.17L1048.69 326.91L1048.75 323.66L1048.78 320.4L1048.75 317.14L1048.69 313.89L1048.58 310.63L1048.42 307.37L1048.22 304.11L1047.97 300.86L1047.68 297.6L1047.35 294.34L1046.97 291.09L1046.55 287.83L1046.09 284.57L1045.58 281.32L1045.02 278.06L1044.43 274.8L1043.79 271.54L1043.11 268.29L1042.38 265.03L1041.61 261.77L1040.8 258.52L1039.95 255.26L1039.05 252L1038.12 248.75L1037.14 245.49L1036.12 242.23L1035.06 238.97L1033.96 235.72L1032.82 232.46L1031.64 229.2L1030.42 225.95L1029.17 222.69L1027.87 219.43L1026.53 216.18L1025.16 212.92L1023.75 209.66L1022.3 206.4L1020.82 203.15L1019.3 199.89L1017.75 196.63L1016.16 193.38L1014.53 190.12L1012.87 186.86L1011.18 183.61L1009.45 180.35L1007.69 177.09L1005.9 173.83L1004.08 170.58L1002.23 167.32L1000.34 164.06L998.43 160.81L996.49 157.55L994.52 154.29L992.52 151.04L990.49 147.78L988.44 144.52L986.36 141.26L984.25 138.01L982.12 134.75L979.97 131.49L977.79 128.24L975.59 124.98L973.36 121.72L971.12 118.47L968.85 115.21L966.57 111.95L964.26 108.69L961.94 105.44L959.59 102.18L957.23 98.92L954.86 95.67L952.46 92.41L950.06 89.15L947.63 85.9L945.2 82.64L942.75 79.38L940.28 76.12L937.81 72.87L935.33 69.61L932.83 66.35L930.33 63.1L927.82 59.84L925.3 56.58L922.77 53.33L920.24 50.07L917.7 46.81L915.16 43.55L912.61 40.3L910.06 37.04L907.51 33.78L904.95 30.53L902.4 27.27"/><path d="M902.4 613.53L904.1 610.27L905.81 607.02L907.51 603.76L909.21 600.5L910.91 597.25L912.6 593.99L914.29 590.73L915.98 587.47L917.67 584.22L919.35 580.96L921.02 577.7L922.69 574.45L924.35 571.19L926.01 567.93L927.66 564.67L929.3 561.42L930.93 558.16L932.56 554.9L934.17 551.65L935.78 548.39L937.37 545.13L938.96 541.88L940.53 538.62L942.09 535.36L943.64 532.11L945.18 528.85L946.7 525.59L948.21 522.33L949.71 519.08L951.19 515.82L952.66 512.56L954.11 509.31L955.55 506.05L956.97 502.79L958.37 499.53L959.76 496.28L961.13 493.02L962.48 489.76L963.81 486.51L965.13 483.25L966.42 479.99L967.7 476.74L968.95 473.48L970.19 470.22L971.4 466.96L972.6 463.71L973.77 460.45L974.92 457.19L976.05 453.94L977.15 450.68L978.24 447.42L979.3 444.17L980.33 440.91L981.35 437.65L982.34 434.39L983.3 431.14L984.24 427.88L985.16 424.62L986.05 421.37L986.91 418.11L987.75 414.85L988.56 411.6L989.35 408.34L990.11 405.08L990.84 401.82L991.55 398.57L992.23 395.31L992.88 392.05L993.5 388.8L994.1 385.54L994.67 382.28L995.21 379.03L995.72 375.77L996.2 372.51L996.66 369.25L997.09 366L997.48 362.74L997.85 359.48L998.19 356.23L998.5 352.97L998.78 349.71L999.03 346.46L999.26 343.2L999.45 339.94L999.61 336.69L999.75 333.43L999.85 330.17L999.92 326.91L999.97 323.66L999.98 320.4L999.97 317.14L999.92 313.89L999.85 310.63L999.75 307.37L999.61 304.11L999.45 300.86L999.26 297.6L999.03 294.34L998.78 291.09L998.5 287.83L998.19 284.57L997.85 281.32L997.48 278.06L997.09 274.8L996.66 271.54L996.2 268.29L995.72 265.03L995.21 261.77L994.67 258.52L994.1 255.26L993.5 252L992.88 248.75L992.23 245.49L991.55 242.23L990.84 238.97L990.11 235.72L989.35 232.46L988.56 229.2L987.75 225.95L986.91 222.69L986.05 219.43L985.16 216.18L984.24 212.92L983.3 209.66L982.34 206.4L981.35 203.15L980.33 199.89L979.3 196.63L978.24 193.38L977.15 190.12L976.05 186.86L974.92 183.61L973.77 180.35L972.6 177.09L971.4 173.83L970.19 170.58L968.95 167.32L967.7 164.06L966.42 160.81L965.13 157.55L963.81 154.29L962.48 151.04L961.13 147.78L959.76 144.52L958.37 141.26L956.97 138.01L955.55 134.75L954.11 131.49L952.66 128.24L951.19 124.98L949.71 121.72L948.21 118.47L946.7 115.21L945.18 111.95L943.64 108.69L942.09 105.44L940.53 102.18L938.96 98.92L937.37 95.67L935.78 92.41L934.17 89.15L932.56 85.9L930.93 82.64L929.3 79.38L927.66 76.12L926.01 72.87L924.35 69.61L922.69 66.35L921.02 63.1L919.35 59.84L917.67 56.58L915.98 53.33L914.29 50.07L912.6 46.81L910.91 43.55L909.21 40.3L907.51 37.04L905.81 33.78L904.1 30.53L902.4 27.27"/><path d="M902.4 613.53L903.25 610.27L904.1 607.02L904.95 603.76L905.8 600.5L906.65 597.25L907.5 593.99L908.35 590.73L909.19 587.47L910.03 584.22L910.87 580.96L911.71 577.7L912.54 574.45L913.38 571.19L914.2 567.93L915.03 564.67L915.85 561.42L916.67 558.16L917.48 554.9L918.29 551.65L919.09 548.39L919.89 545.13L920.68 541.88L921.46 538.62L922.25 535.36L923.02 532.11L923.79 528.85L924.55 525.59L925.31 522.33L926.05 519.08L926.8 515.82L927.53 512.56L928.26 509.31L928.97 506.05L929.68 502.79L930.39 499.53L931.08 496.28L931.76 493.02L932.44 489.76L933.11 486.51L933.76 483.25L934.41 479.99L935.05 476.74L935.68 473.48L936.29 470.22L936.9 466.96L937.5 463.71L938.08 460.45L938.66 457.19L939.22 453.94L939.78 450.68L940.32 447.42L940.85 444.17L941.37 440.91L941.87 437.65L942.37 434.39L942.85 431.14L943.32 427.88L943.78 424.62L944.22 421.37L944.66 418.11L945.07 414.85L945.48 411.6L945.87 408.34L946.25 405.08L946.62 401.82L946.97 398.57L947.31 395.31L947.64 392.05L947.95 388.8L948.25 385.54L948.53 382.28L948.8 379.03L949.06 375.77L949.3 372.51L949.53 369.25L949.74 366L949.94 362.74L950.13 359.48L950.3 356.23L950.45 352.97L950.59 349.71L950.72 346.46L950.83 343.2L950.92 339.94L951.01 336.69L951.07 333.43L951.13 330.17L951.16 326.91L951.18 323.66L951.19 320.4L951.18 317.14L951.16 313.89L951.13 310.63L951.07 307.37L951.01 304.11L950.92 300.86L950.83 297.6L950.72 294.34L950.59 291.09L950.45 287.83L950.3 284.57L950.13 281.32L949.94 278.06L949.74 274.8L949.53 271.54L949.3 268.29L949.06 265.03L948.8 261.77L948.53 258.52L948.25 255.26L947.95 252L947.64 248.75L947.31 245.49L946.97 242.23L946.62 238.97L946.25 235.72L945.87 232.46L945.48 229.2L945.07 225.95L944.66 222.69L944.22 219.43L943.78 216.18L943.32 212.92L942.85 209.66L942.37 206.4L941.87 203.15L941.37 199.89L940.85 196.63L940.32 193.38L939.78 190.12L939.22 186.86L938.66 183.61L938.08 180.35L937.5 177.09L936.9 173.83L936.29 170.58L935.68 167.32L935.05 164.06L934.41 160.81L933.76 157.55L933.11 154.29L932.44 151.04L931.76 147.78L931.08 144.52L930.39 141.26L929.68 138.01L928.97 134.75L928.26 131.49L927.53 128.24L926.8 124.98L926.05 121.72L925.31 118.47L924.55 115.21L923.79 111.95L923.02 108.69L922.25 105.44L921.46 102.18L920.68 98.92L919.89 95.67L919.09 92.41L918.29 89.15L917.48 85.9L916.67 82.64L915.85 79.38L915.03 76.12L914.2 72.87L913.38 69.61L912.54 66.35L911.71 63.1L910.87 59.84L910.03 56.58L909.19 53.33L908.35 50.07L907.5 46.81L906.65 43.55L905.8 40.3L904.95 37.04L904.1 33.78L903.25 30.53L902.4 27.27"/><path d="M902.4 613.53L902.4 610.27L902.4 607.02L902.4 603.76L902.4 600.5L902.4 597.25L902.4 593.99L902.4 590.73L902.4 587.47L902.4 584.22L902.4 580.96L902.4 577.7L902.4 574.45L902.4 571.19L902.4 567.93L902.4 564.67L902.4 561.42L902.4 558.16L902.4 554.9L902.4 551.65L902.4 548.39L902.4 545.13L902.4 541.88L902.4 538.62L902.4 535.36L902.4 532.11L902.4 528.85L902.4 525.59L902.4 522.33L902.4 519.08L902.4 515.82L902.4 512.56L902.4 509.31L902.4 506.05L902.4 502.79L902.4 499.53L902.4 496.28L902.4 493.02L902.4 489.76L902.4 486.51L902.4 483.25L902.4 479.99L902.4 476.74L902.4 473.48L902.4 470.22L902.4 466.96L902.4 463.71L902.4 460.45L902.4 457.19L902.4 453.94L902.4 450.68L902.4 447.42L902.4 444.17L902.4 440.91L902.4 437.65L902.4 434.39L902.4 431.14L902.4 427.88L902.4 424.62L902.4 421.37L902.4 418.11L902.4 414.85L902.4 411.6L902.4 408.34L902.4 405.08L902.4 401.82L902.4 398.57L902.4 395.31L902.4 392.05L902.4 388.8L902.4 385.54L902.4 382.28L902.4 379.03L902.4 375.77L902.4 372.51L902.4 369.25L902.4 366L902.4 362.74L902.4 359.48L902.4 356.23L902.4 352.97L902.4 349.71L902.4 346.46L902.4 343.2L902.4 339.94L902.4 336.69L902.4 333.43L902.4 330.17L902.4 326.91L902.4 323.66L902.4 320.4L902.4 317.14L902.4 313.89L902.4 310.63L902.4 307.37L902.4 304.11L902.4 300.86L902.4 297.6L902.4 294.34L902.4 291.09L902.4 287.83L902.4 284.57L902.4 281.32L902.4 278.06L902.4 274.8L902.4 271.54L902.4 268.29L902.4 265.03L902.4 261.77L902.4 258.52L902.4 255.26L902.4 252L902.4 248.75L902.4 245.49L902.4 242.23L902.4 238.97L902.4 235.72L902.4 232.46L902.4 229.2L902.4 225.95L902.4 222.69L902.4 219.43L902.4 216.18L902.4 212.92L902.4 209.66L902.4 206.4L902.4 203.15L902.4 199.89L902.4 196.63L902.4 193.38L902.4 190.12L902.4 186.86L902.4 183.61L902.4 180.35L902.4 177.09L902.4 173.83L902.4 170.58L902.4 167.32L902.4 164.06L902.4 160.81L902.4 157.55L902.4 154.29L902.4 151.04L902.4 147.78L902.4 144.52L902.4 141.26L902.4 138.01L902.4 134.75L902.4 131.49L902.4 128.24L902.4 124.98L902.4 121.72L902.4 118.47L902.4 115.21L902.4 111.95L902.4 108.69L902.4 105.44L902.4 102.18L902.4 98.92L902.4 95.67L902.4 92.41L902.4 89.15L902.4 85.9L902.4 82.64L902.4 79.38L902.4 76.12L902.4 72.87L902.4 69.61L902.4 66.35L902.4 63.1L902.4 59.84L902.4 56.58L902.4 53.33L902.4 50.07L902.4 46.81L902.4 43.55L902.4 40.3L902.4 37.04L902.4 33.78L902.4 30.53L902.4 27.27"/><path d="M902.4 613.53L901.55 610.27L900.7 607.02L899.85 603.76L899 600.5L898.15 597.25L897.3 593.99L896.45 590.73L895.61 587.47L894.77 584.22L893.93 580.96L893.09 577.7L892.26 574.45L891.42 571.19L890.6 567.93L889.77 564.67L888.95 561.42L888.13 558.16L887.32 554.9L886.51 551.65L885.71 548.39L884.91 545.13L884.12 541.88L883.34 538.62L882.55 535.36L881.78 532.11L881.01 528.85L880.25 525.59L879.49 522.33L878.75 519.08L878 515.82L877.27 512.56L876.54 509.31L875.83 506.05L875.12 502.79L874.41 499.53L873.72 496.28L873.04 493.02L872.36 489.76L871.69 486.51L871.04 483.25L870.39 479.99L869.75 476.74L869.12 473.48L868.51 470.22L867.9 466.96L867.3 463.71L866.72 460.45L866.14 457.19L865.58 453.94L865.02 450.68L864.48 447.42L863.95 444.17L863.43 440.91L862.93 437.65L862.43 434.39L861.95 431.14L861.48 427.88L861.02 424.62L860.58 421.37L860.14 418.11L859.73 414.85L859.32 411.6L858.93 408.34L858.55 405.08L858.18 401.82L857.83 398.57L857.49 395.31L857.16 392.05L856.85 388.8L856.55 385.54L856.27 382.28L856 379.03L855.74 375.77L855.5 372.51L855.27 369.25L855.06 366L854.86 362.74L854.67 359.48L854.5 356.23L854.35 352.97L854.21 349.71L854.08 346.46L853.97 343.2L853.88 339.94L853.79 336.69L853.73 333.43L853.67 330.17L853.64 326.91L853.62 323.66L853.61 320.4L853.62 317.14L853.64 313.89L853.67 310.63L853.73 307.37L853.79 304.11L853.88 300.86L853.97 297.6L854.08 294.34L854.21 291.09L854.35 287.83L854.5 284.57L854.67 281.32L854.86 278.06L855.06 274.8L855.27 271.54L855.5 268.29L855.74 265.03L856 261.77L856.27 258.52L856.55 255.26L856.85 252L857.16 248.75L857.49 245.49L857.83 242.23L858.18 238.97L858.55 235.72L858.93 232.46L859.32 229.2L859.73 225.95L860.14 222.69L860.58 219.43L861.02 216.18L861.48 212.92L861.95 209.66L862.43 206.4L862.93 203.15L863.43 199.89L863.95 196.63L864.48 193.38L865.02 190.12L865.58 186.86L866.14 183.61L866.72 180.35L867.3 177.09L867.9 173.83L868.51 170.58L869.12 167.32L869.75 164.06L870.39 160.81L871.04 157.55L871.69 154.29L872.36 151.04L873.04 147.78L873.72 144.52L874.41 141.26L875.12 138.01L875.83 134.75L876.54 131.49L877.27 128.24L878 124.98L878.75 121.72L879.49 118.47L880.25 115.21L881.01 111.95L881.78 108.69L882.55 105.44L883.34 102.18L884.12 98.92L884.91 95.67L885.71 92.41L886.51 89.15L887.32 85.9L888.13 82.64L888.95 79.38L889.77 76.12L890.6 72.87L891.42 69.61L892.26 66.35L893.09 63.1L893.93 59.84L894.77 56.58L895.61 53.33L896.45 50.07L897.3 46.81L898.15 43.55L899 40.3L899.85 37.04L900.7 33.78L901.55 30.53L902.4 27.27"/><path d="M902.4 613.53L900.7 610.27L898.99 607.02L897.29 603.76L895.59 600.5L893.89 597.25L892.2 593.99L890.51 590.73L888.82 587.47L887.13 584.22L885.45 580.96L883.78 577.7L882.11 574.45L880.45 571.19L878.79 567.93L877.14 564.67L875.5 561.42L873.87 558.16L872.24 554.9L870.63 551.65L869.02 548.39L867.43 545.13L865.84 541.88L864.27 538.62L862.71 535.36L861.16 532.11L859.62 528.85L858.1 525.59L856.59 522.33L855.09 519.08L853.61 515.82L852.14 512.56L850.69 509.31L849.25 506.05L847.83 502.79L846.43 499.53L845.04 496.28L843.67 493.02L842.32 489.76L840.99 486.51L839.67 483.25L838.38 479.99L837.1 476.74L835.85 473.48L834.61 470.22L833.4 466.96L832.2 463.71L831.03 460.45L829.88 457.19L828.75 453.94L827.65 450.68L826.56 447.42L825.5 444.17L824.47 440.91L823.45 437.65L822.46 434.39L821.5 431.14L820.56 427.88L819.64 424.62L818.75 421.37L817.89 418.11L817.05 414.85L816.24 411.6L815.45 408.34L814.69 405.08L813.96 401.82L813.25 398.57L812.57 395.31L811.92 392.05L811.3 388.8L810.7 385.54L810.13 382.28L809.59 379.03L809.08 375.77L808.6 372.51L808.14 369.25L807.71 366L807.32 362.74L806.95 359.48L806.61 356.23L806.3 352.97L806.02 349.71L805.77 346.46L805.54 343.2L805.35 339.94L805.19 336.69L805.05 333.43L804.95 330.17L804.88 326.91L804.83 323.66L804.82 320.4L804.83 317.14L804.88 313.89L804.95 310.63L805.05 307.37L805.19 304.11L805.35 300.86L805.54 297.6L805.77 294.34L806.02 291.09L806.3 287.83L806.61 284.57L806.95 281.32L807.32 278.06L807.71 274.8L808.14 271.54L808.6 268.29L809.08 265.03L809.59 261.77L810.13 258.52L810.7 255.26L811.3 252L811.92 248.75L812.57 245.49L813.25 242.23L813.96 238.97L814.69 235.72L815.45 232.46L816.24 229.2L817.05 225.95L817.89 222.69L818.75 219.43L819.64 216.18L820.56 212.92L821.5 209.66L822.46 206.4L823.45 203.15L824.47 199.89L825.5 196.63L826.56 193.38L827.65 190.12L828.75 186.86L829.88 183.61L831.03 180.35L832.2 177.09L833.4 173.83L834.61 170.58L835.85 167.32L837.1 164.06L838.38 160.81L839.67 157.55L840.99 154.29L842.32 151.04L843.67 147.78L845.04 144.52L846.43 141.26L847.83 138.01L849.25 134.75L850.69 131.49L852.14 128.24L853.61 124.98L855.09 121.72L856.59 118.47L858.1 115.21L859.62 111.95L861.16 108.69L862.71 105.44L864.27 102.18L865.84 98.92L867.43 95.67L869.02 92.41L870.63 89.15L872.24 85.9L873.87 82.64L875.5 79.38L877.14 76.12L878.79 72.87L880.45 69.61L882.11 66.35L883.78 63.1L885.45 59.84L887.13 56.58L888.82 53.33L890.51 50.07L892.2 46.81L893.89 43.55L895.59 40.3L897.29 37.04L898.99 33.78L900.7 30.53L902.4 27.27"/><path d="M902.4 613.53L899.85 610.27L897.29 607.02L894.74 603.76L892.19 600.5L889.64 597.25L887.1 593.99L884.56 590.73L882.03 587.47L879.5 584.22L876.98 580.96L874.47 577.7L871.97 574.45L869.47 571.19L866.99 567.93L864.52 564.67L862.05 561.42L859.6 558.16L857.17 554.9L854.74 551.65L852.34 548.39L849.94 545.13L847.57 541.88L845.21 538.62L842.86 535.36L840.54 532.11L838.23 528.85L835.95 525.59L833.68 522.33L831.44 519.08L829.21 515.82L827.01 512.56L824.83 509.31L822.68 506.05L820.55 502.79L818.44 499.53L816.36 496.28L814.31 493.02L812.28 489.76L810.28 486.51L808.31 483.25L806.37 479.99L804.46 476.74L802.57 473.48L800.72 470.22L798.9 466.96L797.11 463.71L795.35 460.45L793.62 457.19L791.93 453.94L790.27 450.68L788.64 447.42L787.05 444.17L785.5 440.91L783.98 437.65L782.5 434.39L781.05 431.14L779.64 427.88L778.27 424.62L776.93 421.37L775.63 418.11L774.38 414.85L773.16 411.6L771.98 408.34L770.84 405.08L769.74 401.82L768.68 398.57L767.66 395.31L766.68 392.05L765.75 388.8L764.85 385.54L764 382.28L763.19 379.03L762.42 375.77L761.69 372.51L761.01 369.25L760.37 366L759.78 362.74L759.22 359.48L758.71 356.23L758.25 352.97L757.83 349.71L757.45 346.46L757.12 343.2L756.83 339.94L756.58 336.69L756.38 333.43L756.22 330.17L756.11 326.91L756.05 323.66L756.02 320.4L756.05 317.14L756.11 313.89L756.22 310.63L756.38 307.37L756.58 304.11L756.83 300.86L757.12 297.6L757.45 294.34L757.83 291.09L758.25 287.83L758.71 284.57L759.22 281.32L759.78 278.06L760.37 274.8L761.01 271.54L761.69 268.29L762.42 265.03L763.19 261.77L764 258.52L764.85 255.26L765.75 252L766.68 248.75L767.66 245.49L768.68 242.23L769.74 238.97L770.84 235.72L771.98 232.46L773.16 229.2L774.38 225.95L775.63 222.69L776.93 219.43L778.27 216.18L779.64 212.92L781.05 209.66L782.5 206.4L783.98 203.15L785.5 199.89L787.05 196.63L788.64 193.38L790.27 190.12L791.93 186.86L793.62 183.61L795.35 180.35L797.11 177.09L798.9 173.83L800.72 170.58L802.57 167.32L804.46 164.06L806.37 160.81L808.31 157.55L810.28 154.29L812.28 151.04L814.31 147.78L816.36 144.52L818.44 141.26L820.55 138.01L822.68 134.75L824.83 131.49L827.01 128.24L829.21 124.98L831.44 121.72L833.68 118.47L835.95 115.21L838.23 111.95L840.54 108.69L842.86 105.44L845.21 102.18L847.57 98.92L849.94 95.67L852.34 92.41L854.74 89.15L857.17 85.9L859.6 82.64L862.05 79.38L864.52 76.12L866.99 72.87L869.47 69.61L871.97 66.35L874.47 63.1L876.98 59.84L879.5 56.58L882.03 53.33L884.56 50.07L887.1 46.81L889.64 43.55L892.19 40.3L894.74 37.04L897.29 33.78L899.85 30.53L902.4 27.27"/><path d="M902.4 613.53L898.99 610.27L895.59 607.02L892.19 603.76L888.79 600.5L885.39 597.25L882 593.99L878.62 590.73L875.24 587.47L871.87 584.22L868.51 580.96L865.16 577.7L861.82 574.45L858.5 571.19L855.18 567.93L851.89 564.67L848.6 561.42L845.34 558.16L842.09 554.9L838.86 551.65L835.65 548.39L832.46 545.13L829.29 541.88L826.14 538.62L823.02 535.36L819.92 532.11L816.84 528.85L813.8 525.59L810.77 522.33L807.78 519.08L804.82 515.82L801.88 512.56L798.98 509.31L796.1 506.05L793.26 502.79L790.46 499.53L787.68 496.28L784.94 493.02L782.24 489.76L779.58 486.51L776.95 483.25L774.36 479.99L771.81 476.74L769.3 473.48L766.82 470.22L764.4 466.96L762.01 463.71L759.66 460.45L757.36 457.19L755.1 453.94L752.89 450.68L750.73 447.42L748.61 444.17L746.53 440.91L744.51 437.65L742.53 434.39L740.6 431.14L738.72 427.88L736.89 424.62L735.11 421.37L733.38 418.11L731.7 414.85L730.08 411.6L728.5 408.34L726.98 405.08L725.52 401.82L724.11 398.57L722.75 395.31L721.44 392.05L720.19 388.8L719 385.54L717.87 382.28L716.78 379.03L715.76 375.77L714.79 372.51L713.88 369.25L713.03 366L712.23 362.74L711.5 359.48L710.82 356.23L710.2 352.97L709.63 349.71L709.13 346.46L708.69 343.2L708.3 339.94L707.97 336.69L707.71 333.43L707.5 330.17L707.35 326.91L707.26 323.66L707.23 320.4L707.26 317.14L707.35 313.89L707.5 310.63L707.71 307.37L707.97 304.11L708.3 300.86L708.69 297.6L709.13 294.34L709.63 291.09L710.2 287.83L710.82 284.57L711.5 281.32L712.23 278.06L713.03 274.8L713.88 271.54L714.79 268.29L715.76 265.03L716.78 261.77L717.87 258.52L719 255.26L720.19 252L721.44 248.75L722.75 245.49L724.11 242.23L725.52 238.97L726.98 235.72L728.5 232.46L730.08 229.2L731.7 225.95L733.38 222.69L735.11 219.43L736.89 216.18L738.72 212.92L740.6 209.66L742.53 206.4L744.51 203.15L746.53 199.89L748.61 196.63L750.73 193.38L752.89 190.12L755.1 186.86L757.36 183.61L759.66 180.35L762.01 177.09L764.4 173.83L766.82 170.58L769.3 167.32L771.81 164.06L774.36 160.81L776.95 157.55L779.58 154.29L782.24 151.04L784.94 147.78L787.68 144.52L790.46 141.26L793.26 138.01L796.1 134.75L798.98 131.49L801.88 128.24L804.82 124.98L807.78 121.72L810.77 118.47L813.8 115.21L816.84 111.95L819.92 108.69L823.02 105.44L826.14 102.18L829.29 98.92L832.46 95.67L835.65 92.41L838.86 89.15L842.09 85.9L845.34 82.64L848.6 79.38L851.89 76.12L855.18 72.87L858.5 69.61L861.82 66.35L865.16 63.1L868.51 59.84L871.87 56.58L875.24 53.33L878.62 50.07L882 46.81L885.39 43.55L888.79 40.3L892.19 37.04L895.59 33.78L898.99 30.53L902.4 27.27"/><path d="M902.4 613.53L898.14 610.27L893.89 607.02L889.63 603.76L885.38 600.5L881.14 597.25L876.9 593.99L872.67 590.73L868.45 587.47L864.24 584.22L860.04 580.96L855.85 577.7L851.68 574.45L847.52 571.19L843.38 567.93L839.26 564.67L835.16 561.42L831.07 558.16L827.01 554.9L822.97 551.65L818.96 548.39L814.97 545.13L811.01 541.88L807.08 538.62L803.17 535.36L799.3 532.11L795.45 528.85L791.64 525.59L787.87 522.33L784.13 519.08L780.42 515.82L776.75 512.56L773.12 509.31L769.53 506.05L765.98 502.79L762.47 499.53L759 496.28L755.58 493.02L752.2 489.76L748.87 486.51L745.59 483.25L742.35 479.99L739.16 476.74L736.02 473.48L732.93 470.22L729.89 466.96L726.91 463.71L723.98 460.45L721.1 457.19L718.28 453.94L715.52 450.68L712.81 447.42L710.16 444.17L707.56 440.91L705.03 437.65L702.56 434.39L700.15 431.14L697.8 427.88L695.51 424.62L693.29 421.37L691.12 418.11L689.03 414.85L687 411.6L685.03 408.34L683.13 405.08L681.3 401.82L679.53 398.57L677.83 395.31L676.2 392.05L674.64 388.8L673.15 385.54L671.73 382.28L670.38 379.03L669.1 375.77L667.89 372.51L666.75 369.25L665.69 366L664.69 362.74L663.77 359.48L662.92 356.23L662.15 352.97L661.44 349.71L660.81 346.46L660.26 343.2L659.78 339.94L659.37 336.69L659.03 333.43L658.77 330.17L658.59 326.91L658.48 323.66L658.44 320.4L658.48 317.14L658.59 313.89L658.77 310.63L659.03 307.37L659.37 304.11L659.78 300.86L660.26 297.6L660.81 294.34L661.44 291.09L662.15 287.83L662.92 284.57L663.77 281.32L664.69 278.06L665.69 274.8L666.75 271.54L667.89 268.29L669.1 265.03L670.38 261.77L671.73 258.52L673.15 255.26L674.64 252L676.2 248.75L677.83 245.49L679.53 242.23L681.3 238.97L683.13 235.72L685.03 232.46L687 229.2L689.03 225.95L691.12 222.69L693.29 219.43L695.51 216.18L697.8 212.92L700.15 209.66L702.56 206.4L705.03 203.15L707.56 199.89L710.16 196.63L712.81 193.38L715.52 190.12L718.28 186.86L721.1 183.61L723.98 180.35L726.91 177.09L729.89 173.83L732.93 170.58L736.02 167.32L739.16 164.06L742.35 160.81L745.59 157.55L748.87 154.29L752.2 151.04L755.58 147.78L759 144.52L762.47 141.26L765.98 138.01L769.53 134.75L773.12 131.49L776.75 128.24L780.42 124.98L784.13 121.72L787.87 118.47L791.64 115.21L795.45 111.95L799.3 108.69L803.17 105.44L807.08 102.18L811.01 98.92L814.97 95.67L818.96 92.41L822.97 89.15L827.01 85.9L831.07 82.64L835.16 79.38L839.26 76.12L843.38 72.87L847.52 69.61L851.68 66.35L855.85 63.1L860.04 59.84L864.24 56.58L868.45 53.33L872.67 50.07L876.9 46.81L881.14 43.55L885.38 40.3L889.63 37.04L893.89 33.78L898.14 30.53L902.4 27.27"/><path d="M902.4 613.53L897.29 610.27L892.18 607.02L887.08 603.76L881.98 600.5L876.88 597.25L871.8 593.99L866.72 590.73L861.66 587.47L856.6 584.22L851.56 580.96L846.54 577.7L841.53 574.45L836.55 571.19L831.58 567.93L826.63 564.67L821.71 561.42L816.81 558.16L811.93 554.9L807.09 551.65L802.27 548.39L797.49 545.13L792.73 541.88L788.01 538.62L783.33 535.36L778.68 532.11L774.07 528.85L769.49 525.59L764.96 522.33L760.47 519.08L756.02 515.82L751.62 512.56L747.27 509.31L742.96 506.05L738.7 502.79L734.48 499.53L730.32 496.28L726.22 493.02L722.16 489.76L718.17 486.51L714.22 483.25L710.34 479.99L706.51 476.74L702.74 473.48L699.04 470.22L695.39 466.96L691.81 463.71L688.29 460.45L684.84 457.19L681.46 453.94L678.14 450.68L674.89 447.42L671.71 444.17L668.6 440.91L665.56 437.65L662.59 434.39L659.7 431.14L656.88 427.88L654.13 424.62L651.46 421.37L648.87 418.11L646.35 414.85L643.92 411.6L641.56 408.34L639.28 405.08L637.08 401.82L634.96 398.57L632.92 395.31L630.97 392.05L629.09 388.8L627.3 385.54L625.6 382.28L623.98 379.03L622.44 375.77L620.99 372.51L619.62 369.25L618.34 366L617.15 362.74L616.05 359.48L615.03 356.23L614.1 352.97L613.25 349.71L612.5 346.46L611.83 343.2L611.25 339.94L610.76 336.69L610.36 333.43L610.05 330.17L609.83 326.91L609.69 323.66L609.65 320.4L609.69 317.14L609.83 313.89L610.05 310.63L610.36 307.37L610.76 304.11L611.25 300.86L611.83 297.6L612.5 294.34L613.25 291.09L614.1 287.83L615.03 284.57L616.05 281.32L617.15 278.06L618.34 274.8L619.62 271.54L620.99 268.29L622.44 265.03L623.98 261.77L625.6 258.52L627.3 255.26L629.09 252L630.97 248.75L632.92 245.49L634.96 242.23L637.08 238.97L639.28 235.72L641.56 232.46L643.92 229.2L646.35 225.95L648.87 222.69L651.46 219.43L654.13 216.18L656.88 212.92L659.7 209.66L662.59 206.4L665.56 203.15L668.6 199.89L671.71 196.63L674.89 193.38L678.14 190.12L681.46 186.86L684.84 183.61L688.29 180.35L691.81 177.09L695.39 173.83L699.04 170.58L702.74 167.32L706.51 164.06L710.34 160.81L714.22 157.55L718.17 154.29L722.16 151.04L726.22 147.78L730.32 144.52L734.48 141.26L738.7 138.01L742.96 134.75L747.27 131.49L751.62 128.24L756.02 124.98L760.47 121.72L764.96 118.47L769.49 115.21L774.07 111.95L778.68 108.69L783.33 105.44L788.01 102.18L792.73 98.92L797.49 95.67L802.27 92.41L807.09 89.15L811.93 85.9L816.81 82.64L821.71 79.38L826.63 76.12L831.58 72.87L836.55 69.61L841.53 66.35L846.54 63.1L851.56 59.84L856.6 56.58L861.66 53.33L866.72 50.07L871.8 46.81L876.88 43.55L881.98 40.3L887.08 37.04L892.18 33.78L897.29 30.53L902.4 27.27"/><path d="M902.4 613.53L896.44 610.27L890.48 607.02L884.52 603.76L878.58 600.5L872.63 597.25L866.7 593.99L860.78 590.73L854.87 587.47L848.97 584.22L843.09 580.96L837.23 577.7L831.39 574.45L825.57 571.19L819.77 567.93L814 564.67L808.26 561.42L802.54 558.16L796.86 554.9L791.2 551.65L785.59 548.39L780 545.13L774.46 541.88L768.95 538.62L763.48 535.36L758.06 532.11L752.68 528.85L747.34 525.59L742.05 522.33L736.82 519.08L731.63 515.82L726.49 512.56L721.41 509.31L716.38 506.05L711.41 502.79L706.5 499.53L701.65 496.28L696.85 493.02L692.12 489.76L687.46 486.51L682.86 483.25L678.33 479.99L673.86 476.74L669.47 473.48L665.14 470.22L660.89 466.96L656.71 463.71L652.61 460.45L648.58 457.19L644.63 453.94L640.76 450.68L636.97 447.42L633.26 444.17L629.63 440.91L626.09 437.65L622.62 434.39L619.25 431.14L615.96 427.88L612.75 424.62L609.64 421.37L606.61 418.11L603.68 414.85L600.83 411.6L598.08 408.34L595.42 405.08L592.86 401.82L590.38 398.57L588.01 395.31L585.73 392.05L583.54 388.8L581.45 385.54L579.46 382.28L577.57 379.03L575.78 375.77L574.09 372.51L572.49 369.25L571 366L569.61 362.74L568.32 359.48L567.13 356.23L566.04 352.97L565.06 349.71L564.18 346.46L563.4 343.2L562.73 339.94L562.16 336.69L561.69 333.43L561.32 330.17L561.06 326.91L560.91 323.66L560.86 320.4L560.91 317.14L561.06 313.89L561.32 310.63L561.69 307.37L562.16 304.11L562.73 300.86L563.4 297.6L564.18 294.34L565.06 291.09L566.04 287.83L567.13 284.57L568.32 281.32L569.61 278.06L571 274.8L572.49 271.54L574.09 268.29L575.78 265.03L577.57 261.77L579.46 258.52L581.45 255.26L583.54 252L585.73 248.75L588.01 245.49L590.38 242.23L592.86 238.97L595.42 235.72L598.08 232.46L600.83 229.2L603.68 225.95L606.61 222.69L609.64 219.43L612.75 216.18L615.96 212.92L619.25 209.66L622.62 206.4L626.09 203.15L629.63 199.89L633.26 196.63L636.97 193.38L640.76 190.12L644.63 186.86L648.58 183.61L652.61 180.35L656.71 177.09L660.89 173.83L665.14 170.58L669.47 167.32L673.86 164.06L678.33 160.81L682.86 157.55L687.46 154.29L692.12 151.04L696.85 147.78L701.65 144.52L706.5 141.26L711.41 138.01L716.38 134.75L721.41 131.49L726.49 128.24L731.63 124.98L736.82 121.72L742.05 118.47L747.34 115.21L752.68 111.95L758.06 108.69L763.48 105.44L768.95 102.18L774.46 98.92L780 95.67L785.59 92.41L791.2 89.15L796.86 85.9L802.54 82.64L808.26 79.38L814 76.12L819.77 72.87L825.57 69.61L831.39 66.35L837.23 63.1L843.09 59.84L848.97 56.58L854.87 53.33L860.78 50.07L866.7 46.81L872.63 43.55L878.58 40.3L884.52 37.04L890.48 33.78L896.44 30.53L902.4 27.27"/><path d="M902.4 613.53L895.59 610.27L888.78 607.02L881.97 603.76L875.17 600.5L868.38 597.25L861.6 593.99L854.83 590.73L848.08 587.47L841.34 584.22L834.62 580.96L827.92 577.7L821.24 574.45L814.59 571.19L807.97 567.93L801.37 564.67L794.81 561.42L788.28 558.16L781.78 554.9L775.32 551.65L768.9 548.39L762.52 545.13L756.18 541.88L749.88 538.62L743.64 535.36L737.44 532.11L731.29 528.85L725.19 525.59L719.15 522.33L713.16 519.08L707.23 515.82L701.36 512.56L695.55 509.31L689.81 506.05L684.13 502.79L678.51 499.53L672.97 496.28L667.49 493.02L662.09 489.76L656.75 486.51L651.5 483.25L646.32 479.99L641.21 476.74L636.19 473.48L631.25 470.22L626.39 466.96L621.62 463.71L616.93 460.45L612.32 457.19L607.81 453.94L603.39 450.68L599.05 447.42L594.81 444.17L590.66 440.91L586.61 437.65L582.66 434.39L578.8 431.14L575.04 427.88L571.38 424.62L567.82 421.37L564.36 418.11L561 414.85L557.75 411.6L554.61 408.34L551.57 405.08L548.64 401.82L545.81 398.57L543.09 395.31L540.49 392.05L537.99 388.8L535.6 385.54L533.33 382.28L531.17 379.03L529.12 375.77L527.18 372.51L525.36 369.25L523.66 366L522.07 362.74L520.59 359.48L519.24 356.23L517.99 352.97L516.87 349.71L515.86 346.46L514.97 343.2L514.2 339.94L513.55 336.69L513.01 333.43L512.6 330.17L512.3 326.91L512.12 323.66L512.06 320.4L512.12 317.14L512.3 313.89L512.6 310.63L513.01 307.37L513.55 304.11L514.2 300.86L514.97 297.6L515.86 294.34L516.87 291.09L517.99 287.83L519.24 284.57L520.59 281.32L522.07 278.06L523.66 274.8L525.36 271.54L527.18 268.29L529.12 265.03L531.17 261.77L533.33 258.52L535.6 255.26L537.99 252L540.49 248.75L543.09 245.49L545.81 242.23L548.64 238.97L551.57 235.72L554.61 232.46L557.75 229.2L561 225.95L564.36 222.69L567.82 219.43L571.38 216.18L575.04 212.92L578.8 209.66L582.66 206.4L586.61 203.15L590.66 199.89L594.81 196.63L599.05 193.38L603.39 190.12L607.81 186.86L612.32 183.61L616.93 180.35L621.62 177.09L626.39 173.83L631.25 170.58L636.19 167.32L641.21 164.06L646.32 160.81L651.5 157.55L656.75 154.29L662.09 151.04L667.49 147.78L672.97 144.52L678.51 141.26L684.13 138.01L689.81 134.75L695.55 131.49L701.36 128.24L707.23 124.98L713.16 121.72L719.15 118.47L725.19 115.21L731.29 111.95L737.44 108.69L743.64 105.44L749.88 102.18L756.18 98.92L762.52 95.67L768.9 92.41L775.32 89.15L781.78 85.9L788.28 82.64L794.81 79.38L801.37 76.12L807.97 72.87L814.59 69.61L821.24 66.35L827.92 63.1L834.62 59.84L841.34 56.58L848.08 53.33L854.83 50.07L861.6 46.81L868.38 43.55L875.17 40.3L881.97 37.04L888.78 33.78L895.59 30.53L902.4 27.27"/><path d="M902.4 613.53L894.74 610.27L887.07 607.02L879.42 603.76L871.77 600.5L864.13 597.25L856.5 593.99L848.88 590.73L841.29 587.47L833.71 584.22L826.15 580.96L818.61 577.7L811.1 574.45L803.62 571.19L796.17 567.93L788.75 564.67L781.36 561.42L774.01 558.16L766.7 554.9L759.43 551.65L752.21 548.39L745.03 545.13L737.9 541.88L730.82 538.62L723.79 535.36L716.82 532.11L709.9 528.85L703.04 525.59L696.24 522.33L689.51 519.08L682.84 515.82L676.23 512.56L669.7 509.31L663.23 506.05L656.84 502.79L650.53 499.53L644.29 496.28L638.13 493.02L632.05 489.76L626.05 486.51L620.13 483.25L614.31 479.99L608.57 476.74L602.92 473.48L597.36 470.22L591.89 466.96L586.52 463.71L581.24 460.45L576.06 457.19L570.99 453.94L566.01 450.68L561.13 447.42L556.36 444.17L551.7 440.91L547.14 437.65L542.69 434.39L538.35 431.14L534.12 427.88L530 424.62L525.99 421.37L522.1 418.11L518.33 414.85L514.67 411.6L511.13 408.34L507.71 405.08L504.41 401.82L501.24 398.57L498.18 395.31L495.25 392.05L492.44 388.8L489.75 385.54L487.2 382.28L484.76 379.03L482.46 375.77L480.28 372.51L478.23 369.25L476.32 366L474.53 362.74L472.87 359.48L471.34 356.23L469.94 352.97L468.68 349.71L467.55 346.46L466.55 343.2L465.68 339.94L464.94 336.69L464.34 333.43L463.87 330.17L463.54 326.91L463.34 323.66L463.27 320.4L463.34 317.14L463.54 313.89L463.87 310.63L464.34 307.37L464.94 304.11L465.68 300.86L466.55 297.6L467.55 294.34L468.68 291.09L469.94 287.83L471.34 284.57L472.87 281.32L474.53 278.06L476.32 274.8L478.23 271.54L480.28 268.29L482.46 265.03L484.76 261.77L487.2 258.52L489.75 255.26L492.44 252L495.25 248.75L498.18 245.49L501.24 242.23L504.41 238.97L507.71 235.72L511.13 232.46L514.67 229.2L518.33 225.95L522.1 222.69L525.99 219.43L530 216.18L534.12 212.92L538.35 209.66L542.69 206.4L547.14 203.15L551.7 199.89L556.36 196.63L561.13 193.38L566.01 190.12L570.99 186.86L576.06 183.61L581.24 180.35L586.52 177.09L591.89 173.83L597.36 170.58L602.92 167.32L608.57 164.06L614.31 160.81L620.13 157.55L626.05 154.29L632.05 151.04L638.13 147.78L644.29 144.52L650.53 141.26L656.84 138.01L663.23 134.75L669.7 131.49L676.23 128.24L682.84 124.98L689.51 121.72L696.24 118.47L703.04 115.21L709.9 111.95L716.82 108.69L723.79 105.44L730.82 102.18L737.9 98.92L745.03 95.67L752.21 92.41L759.43 89.15L766.7 85.9L774.01 82.64L781.36 79.38L788.75 76.12L796.17 72.87L803.62 69.61L811.1 66.35L818.61 63.1L826.15 59.84L833.71 56.58L841.29 53.33L848.88 50.07L856.5 46.81L864.13 43.55L871.77 40.3L879.42 37.04L887.07 33.78L894.74 30.53L902.4 27.27"/><path d="M902.4 613.53L893.88 610.27L885.37 607.02L876.86 603.76L868.36 600.5L859.87 597.25L851.4 593.99L842.94 590.73L834.49 587.47L826.07 584.22L817.67 580.96L809.3 577.7L800.96 574.45L792.64 571.19L784.36 567.93L776.12 564.67L767.91 561.42L759.75 558.16L751.62 554.9L743.55 551.65L735.52 548.39L727.55 545.13L719.62 541.88L711.75 538.62L703.95 535.36L696.2 532.11L688.51 528.85L680.89 525.59L673.34 522.33L665.85 519.08L658.44 515.82L651.1 512.56L643.84 509.31L636.66 506.05L629.56 502.79L622.54 499.53L615.61 496.28L608.76 493.02L602.01 489.76L595.34 486.51L588.77 483.25L582.3 479.99L575.92 476.74L569.64 473.48L563.46 470.22L557.39 466.96L551.42 463.71L545.56 460.45L539.8 457.19L534.16 453.94L528.63 450.68L523.21 447.42L517.91 444.17L512.73 440.91L507.66 437.65L502.72 434.39L497.9 431.14L493.2 427.88L488.62 424.62L484.17 421.37L479.85 418.11L475.66 414.85L471.59 411.6L467.66 408.34L463.86 405.08L460.19 401.82L456.66 398.57L453.27 395.31L450.01 392.05L446.89 388.8L443.91 385.54L441.06 382.28L438.36 379.03L435.8 375.77L433.38 372.51L431.11 369.25L428.97 366L426.99 362.74L425.14 359.48L423.44 356.23L421.89 352.97L420.49 349.71L419.23 346.46L418.12 343.2L417.15 339.94L416.34 336.69L415.67 333.43L415.15 330.17L414.78 326.91L414.55 323.66L414.48 320.4L414.55 317.14L414.78 313.89L415.15 310.63L415.67 307.37L416.34 304.11L417.15 300.86L418.12 297.6L419.23 294.34L420.49 291.09L421.89 287.83L423.44 284.57L425.14 281.32L426.99 278.06L428.97 274.8L431.11 271.54L433.38 268.29L435.8 265.03L438.36 261.77L441.06 258.52L443.91 255.26L446.89 252L450.01 248.75L453.27 245.49L456.66 242.23L460.19 238.97L463.86 235.72L467.66 232.46L471.59 229.2L475.66 225.95L479.85 222.69L484.17 219.43L488.62 216.18L493.2 212.92L497.9 209.66L502.72 206.4L507.66 203.15L512.73 199.89L517.91 196.63L523.21 193.38L528.63 190.12L534.16 186.86L539.8 183.61L545.56 180.35L551.42 177.09L557.39 173.83L563.46 170.58L569.64 167.32L575.92 164.06L582.3 160.81L588.77 157.55L595.34 154.29L602.01 151.04L608.76 147.78L615.61 144.52L622.54 141.26L629.56 138.01L636.66 134.75L643.84 131.49L651.1 128.24L658.44 124.98L665.85 121.72L673.34 118.47L680.89 115.21L688.51 111.95L696.2 108.69L703.95 105.44L711.75 102.18L719.62 98.92L727.55 95.67L735.52 92.41L743.55 89.15L751.62 85.9L759.75 82.64L767.91 79.38L776.12 76.12L784.36 72.87L792.64 69.61L800.96 66.35L809.3 63.1L817.67 59.84L826.07 56.58L834.49 53.33L842.94 50.07L851.4 46.81L859.87 43.55L868.36 40.3L876.86 37.04L885.37 33.78L893.88 30.53L902.4 27.27"/><path d="M902.4 613.53L893.03 610.27L883.67 607.02L874.31 603.76L864.96 600.5L855.62 597.25L846.3 593.99L836.99 590.73L827.7 587.47L818.44 584.22L809.2 580.96L799.99 577.7L790.81 574.45L781.67 571.19L772.56 567.93L763.49 564.67L754.46 561.42L745.48 558.16L736.55 554.9L727.66 551.65L718.83 548.39L710.06 545.13L701.34 541.88L692.69 538.62L684.1 535.36L675.58 532.11L667.12 528.85L658.74 525.59L650.43 522.33L642.2 519.08L634.04 515.82L625.97 512.56L617.99 509.31L610.09 506.05L602.27 502.79L594.55 499.53L586.93 496.28L579.4 493.02L571.97 489.76L564.64 486.51L557.41 483.25L550.29 479.99L543.27 476.74L536.36 473.48L529.57 470.22L522.89 466.96L516.32 463.71L509.87 460.45L503.55 457.19L497.34 453.94L491.25 450.68L485.3 447.42L479.47 444.17L473.76 440.91L468.19 437.65L462.75 434.39L457.45 431.14L452.28 427.88L447.24 424.62L442.35 421.37L437.59 418.11L432.98 414.85L428.51 411.6L424.19 408.34L420.01 405.08L415.97 401.82L412.09 398.57L408.35 395.31L404.77 392.05L401.34 388.8L398.06 385.54L394.93 382.28L391.96 379.03L389.14 375.77L386.48 372.51L383.98 369.25L381.63 366L379.44 362.74L377.42 359.48L375.55 356.23L373.84 352.97L372.3 349.71L370.91 346.46L369.69 343.2L368.63 339.94L367.73 336.69L367 333.43L366.42 330.17L366.01 326.91L365.77 323.66L365.69 320.4L365.77 317.14L366.01 313.89L366.42 310.63L367 307.37L367.73 304.11L368.63 300.86L369.69 297.6L370.91 294.34L372.3 291.09L373.84 287.83L375.55 284.57L377.42 281.32L379.44 278.06L381.63 274.8L383.98 271.54L386.48 268.29L389.14 265.03L391.96 261.77L394.93 258.52L398.06 255.26L401.34 252L404.77 248.75L408.35 245.49L412.09 242.23L415.97 238.97L420.01 235.72L424.19 232.46L428.51 229.2L432.98 225.95L437.59 222.69L442.35 219.43L447.24 216.18L452.28 212.92L457.45 209.66L462.75 206.4L468.19 203.15L473.76 199.89L479.47 196.63L485.3 193.38L491.25 190.12L497.34 186.86L503.55 183.61L509.87 180.35L516.32 177.09L522.89 173.83L529.57 170.58L536.36 167.32L543.27 164.06L550.29 160.81L557.41 157.55L564.64 154.29L571.97 151.04L579.4 147.78L586.93 144.52L594.55 141.26L602.27 138.01L610.09 134.75L617.99 131.49L625.97 128.24L634.04 124.98L642.2 121.72L650.43 118.47L658.74 115.21L667.12 111.95L675.58 108.69L684.1 105.44L692.69 102.18L701.34 98.92L710.06 95.67L718.83 92.41L727.66 89.15L736.55 85.9L745.48 82.64L754.46 79.38L763.49 76.12L772.56 72.87L781.67 69.61L790.81 66.35L799.99 63.1L809.2 59.84L818.44 56.58L827.7 53.33L836.99 50.07L846.3 46.81L855.62 43.55L864.96 40.3L874.31 37.04L883.67 33.78L893.03 30.53L902.4 27.27"/><path d="M902.4 613.53L892.18 610.27L881.97 607.02L871.76 603.76L861.56 600.5L851.37 597.25L841.2 593.99L831.05 590.73L820.91 587.47L810.81 584.22L800.73 580.96L790.68 577.7L780.67 574.45L770.69 571.19L760.75 567.93L750.86 564.67L741.01 561.42L731.22 558.16L721.47 554.9L711.78 551.65L702.15 548.39L692.57 545.13L683.07 541.88L673.63 538.62L664.25 535.36L654.96 532.11L645.73 528.85L636.59 525.59L627.52 522.33L618.54 519.08L609.65 515.82L600.84 512.56L592.13 509.31L583.51 506.05L574.99 502.79L566.57 499.53L558.25 496.28L550.03 493.02L541.93 489.76L533.93 486.51L526.05 483.25L518.27 479.99L510.62 476.74L503.09 473.48L495.67 470.22L488.39 466.96L481.22 463.71L474.19 460.45L467.29 457.19L460.51 453.94L453.88 450.68L447.38 447.42L441.02 444.17L434.8 440.91L428.72 437.65L422.78 434.39L417 431.14L411.36 427.88L405.86 424.62L400.53 421.37L395.34 418.11L390.31 414.85L385.43 411.6L380.71 408.34L376.15 405.08L371.75 401.82L367.52 398.57L363.44 395.31L359.53 392.05L355.78 388.8L352.21 385.54L348.8 382.28L345.55 379.03L342.48 375.77L339.58 372.51L336.85 369.25L334.29 366L331.9 362.74L329.69 359.48L327.65 356.23L325.79 352.97L324.1 349.71L322.59 346.46L321.26 343.2L320.1 339.94L319.12 336.69L318.32 333.43L317.7 330.17L317.25 326.91L316.99 323.66L316.9 320.4L316.99 317.14L317.25 313.89L317.7 310.63L318.32 307.37L319.12 304.11L320.1 300.86L321.26 297.6L322.59 294.34L324.1 291.09L325.79 287.83L327.65 284.57L329.69 281.32L331.9 278.06L334.29 274.8L336.85 271.54L339.58 268.29L342.48 265.03L345.55 261.77L348.8 258.52L352.21 255.26L355.78 252L359.53 248.75L363.44 245.49L367.52 242.23L371.75 238.97L376.15 235.72L380.71 232.46L385.43 229.2L390.31 225.95L395.34 222.69L400.53 219.43L405.86 216.18L411.36 212.92L417 209.66L422.78 206.4L428.72 203.15L434.8 199.89L441.02 196.63L447.38 193.38L453.88 190.12L460.51 186.86L467.29 183.61L474.19 180.35L481.22 177.09L488.39 173.83L495.67 170.58L503.09 167.32L510.62 164.06L518.27 160.81L526.05 157.55L533.93 154.29L541.93 151.04L550.03 147.78L558.25 144.52L566.57 141.26L574.99 138.01L583.51 134.75L592.13 131.49L600.84 128.24L609.65 124.98L618.54 121.72L627.52 118.47L636.59 115.21L645.73 111.95L654.96 108.69L664.25 105.44L673.63 102.18L683.07 98.92L692.57 95.67L702.15 92.41L711.78 89.15L721.47 85.9L731.22 82.64L741.01 79.38L750.86 76.12L760.75 72.87L770.69 69.61L780.67 66.35L790.68 63.1L800.73 59.84L810.81 56.58L820.91 53.33L831.05 50.07L841.2 46.81L851.37 43.55L861.56 40.3L871.76 37.04L881.97 33.78L892.18 30.53L902.4 27.27"/><path d="M1053.94 564.67L1052.26 564.67L1050.57 564.67L1048.89 564.67L1047.2 564.67L1045.52 564.67L1043.84 564.67L1042.15 564.67L1040.47 564.67L1038.79 564.67L1037.1 564.67L1035.42 564.67L1033.73 564.67L1032.05 564.67L1030.37 564.67L1028.68 564.67L1027 564.67L1025.32 564.67L1023.63 564.67L1021.95 564.67L1020.26 564.67L1018.58 564.67L1016.9 564.67L1015.21 564.67L1013.53 564.67L1011.85 564.67L1010.16 564.67L1008.48 564.67L1006.79 564.67L1005.11 564.67L1003.43 564.67L1001.74 564.67L1000.06 564.67L998.38 564.67L996.69 564.67L995.01 564.67L993.32 564.67L991.64 564.67L989.96 564.67L988.27 564.67L986.59 564.67L984.9 564.67L983.22 564.67L981.54 564.67L979.85 564.67L978.17 564.67L976.49 564.67L974.8 564.67L973.12 564.67L971.43 564.67L969.75 564.67L968.07 564.67L966.38 564.67L964.7 564.67L963.02 564.67L961.33 564.67L959.65 564.67L957.96 564.67L956.28 564.67L954.6 564.67L952.91 564.67L951.23 564.67L949.55 564.67L947.86 564.67L946.18 564.67L944.49 564.67L942.81 564.67L941.13 564.67L939.44 564.67L937.76 564.67L936.08 564.67L934.39 564.67L932.71 564.67L931.02 564.67L929.34 564.67L927.66 564.67L925.97 564.67L924.29 564.67L922.61 564.67L920.92 564.67L919.24 564.67L917.55 564.67L915.87 564.67L914.19 564.67L912.5 564.67L910.82 564.67L909.14 564.67L907.45 564.67L905.77 564.67L904.08 564.67L902.4 564.67L900.72 564.67L899.03 564.67L897.35 564.67L895.66 564.67L893.98 564.67L892.3 564.67L890.61 564.67L888.93 564.67L887.25 564.67L885.56 564.67L883.88 564.67L882.19 564.67L880.51 564.67L878.83 564.67L877.14 564.67L875.46 564.67L873.78 564.67L872.09 564.67L870.41 564.67L868.72 564.67L867.04 564.67L865.36 564.67L863.67 564.67L861.99 564.67L860.31 564.67L858.62 564.67L856.94 564.67L855.25 564.67L853.57 564.67L851.89 564.67L850.2 564.67L848.52 564.67L846.84 564.67L845.15 564.67L843.47 564.67L841.78 564.67L840.1 564.67L838.42 564.67L836.73 564.67L835.05 564.67L833.37 564.67L831.68 564.67L830 564.67L828.31 564.67L826.63 564.67L824.95 564.67L823.26 564.67L821.58 564.67L819.9 564.67L818.21 564.67L816.53 564.67L814.84 564.67L813.16 564.67L811.48 564.67L809.79 564.67L808.11 564.67L806.42 564.67L804.74 564.67L803.06 564.67L801.37 564.67L799.69 564.67L798.01 564.67L796.32 564.67L794.64 564.67L792.95 564.67L791.27 564.67L789.59 564.67L787.9 564.67L786.22 564.67L784.54 564.67L782.85 564.67L781.17 564.67L779.48 564.67L777.8 564.67L776.12 564.67L774.43 564.67L772.75 564.67L771.07 564.67L769.38 564.67L767.7 564.67L766.01 564.67L764.33 564.67L762.65 564.67L760.96 564.67L759.28 564.67L757.6 564.67L755.91 564.67L754.23 564.67L752.54 564.67L750.86 564.67"/><path d="M1195.15 515.82L1191.9 515.82L1188.65 515.82L1185.39 515.82L1182.14 515.82L1178.89 515.82L1175.64 515.82L1172.38 515.82L1169.13 515.82L1165.88 515.82L1162.62 515.82L1159.37 515.82L1156.12 515.82L1152.87 515.82L1149.61 515.82L1146.36 515.82L1143.11 515.82L1139.85 515.82L1136.6 515.82L1133.35 515.82L1130.1 515.82L1126.84 515.82L1123.59 515.82L1120.34 515.82L1117.08 515.82L1113.83 515.82L1110.58 515.82L1107.33 515.82L1104.07 515.82L1100.82 515.82L1097.57 515.82L1094.32 515.82L1091.06 515.82L1087.81 515.82L1084.56 515.82L1081.3 515.82L1078.05 515.82L1074.8 515.82L1071.55 515.82L1068.29 515.82L1065.04 515.82L1061.79 515.82L1058.53 515.82L1055.28 515.82L1052.03 515.82L1048.78 515.82L1045.52 515.82L1042.27 515.82L1039.02 515.82L1035.76 515.82L1032.51 515.82L1029.26 515.82L1026.01 515.82L1022.75 515.82L1019.5 515.82L1016.25 515.82L1013 515.82L1009.74 515.82L1006.49 515.82L1003.24 515.82L999.98 515.82L996.73 515.82L993.48 515.82L990.23 515.82L986.97 515.82L983.72 515.82L980.47 515.82L977.21 515.82L973.96 515.82L970.71 515.82L967.46 515.82L964.2 515.82L960.95 515.82L957.7 515.82L954.44 515.82L951.19 515.82L947.94 515.82L944.69 515.82L941.43 515.82L938.18 515.82L934.93 515.82L931.68 515.82L928.42 515.82L925.17 515.82L921.92 515.82L918.66 515.82L915.41 515.82L912.16 515.82L908.91 515.82L905.65 515.82L902.4 515.82L899.15 515.82L895.89 515.82L892.64 515.82L889.39 515.82L886.14 515.82L882.88 515.82L879.63 515.82L876.38 515.82L873.12 515.82L869.87 515.82L866.62 515.82L863.37 515.82L860.11 515.82L856.86 515.82L853.61 515.82L850.36 515.82L847.1 515.82L843.85 515.82L840.6 515.82L837.34 515.82L834.09 515.82L830.84 515.82L827.59 515.82L824.33 515.82L821.08 515.82L817.83 515.82L814.57 515.82L811.32 515.82L808.07 515.82L804.82 515.82L801.56 515.82L798.31 515.82L795.06 515.82L791.8 515.82L788.55 515.82L785.3 515.82L782.05 515.82L778.79 515.82L775.54 515.82L772.29 515.82L769.04 515.82L765.78 515.82L762.53 515.82L759.28 515.82L756.02 515.82L752.77 515.82L749.52 515.82L746.27 515.82L743.01 515.82L739.76 515.82L736.51 515.82L733.25 515.82L730 515.82L726.75 515.82L723.5 515.82L720.24 515.82L716.99 515.82L713.74 515.82L710.48 515.82L707.23 515.82L703.98 515.82L700.73 515.82L697.47 515.82L694.22 515.82L690.97 515.82L687.72 515.82L684.46 515.82L681.21 515.82L677.96 515.82L674.7 515.82L671.45 515.82L668.2 515.82L664.95 515.82L661.69 515.82L658.44 515.82L655.19 515.82L651.93 515.82L648.68 515.82L645.43 515.82L642.18 515.82L638.92 515.82L635.67 515.82L632.42 515.82L629.16 515.82L625.91 515.82L622.66 515.82L619.41 515.82L616.15 515.82L612.9 515.82L609.65 515.82"/><path d="M1316.41 466.96L1311.81 466.96L1307.21 466.96L1302.61 466.96L1298.01 466.96L1293.41 466.96L1288.81 466.96L1284.21 466.96L1279.61 466.96L1275.01 466.96L1270.41 466.96L1265.81 466.96L1261.21 466.96L1256.61 466.96L1252.01 466.96L1247.41 466.96L1242.81 466.96L1238.21 466.96L1233.61 466.96L1229.01 466.96L1224.41 466.96L1219.81 466.96L1215.21 466.96L1210.61 466.96L1206.01 466.96L1201.41 466.96L1196.81 466.96L1192.21 466.96L1187.61 466.96L1183.01 466.96L1178.41 466.96L1173.81 466.96L1169.21 466.96L1164.61 466.96L1160.01 466.96L1155.41 466.96L1150.81 466.96L1146.21 466.96L1141.61 466.96L1137.01 466.96L1132.41 466.96L1127.81 466.96L1123.21 466.96L1118.61 466.96L1114.01 466.96L1109.41 466.96L1104.81 466.96L1100.21 466.96L1095.61 466.96L1091.01 466.96L1086.41 466.96L1081.81 466.96L1077.21 466.96L1072.61 466.96L1068.01 466.96L1063.41 466.96L1058.81 466.96L1054.21 466.96L1049.6 466.96L1045 466.96L1040.4 466.96L1035.8 466.96L1031.2 466.96L1026.6 466.96L1022 466.96L1017.4 466.96L1012.8 466.96L1008.2 466.96L1003.6 466.96L999 466.96L994.4 466.96L989.8 466.96L985.2 466.96L980.6 466.96L976 466.96L971.4 466.96L966.8 466.96L962.2 466.96L957.6 466.96L953 466.96L948.4 466.96L943.8 466.96L939.2 466.96L934.6 466.96L930 466.96L925.4 466.96L920.8 466.96L916.2 466.96L911.6 466.96L907 466.96L902.4 466.96L897.8 466.96L893.2 466.96L888.6 466.96L884 466.96L879.4 466.96L874.8 466.96L870.2 466.96L865.6 466.96L861 466.96L856.4 466.96L851.8 466.96L847.2 466.96L842.6 466.96L838 466.96L833.4 466.96L828.8 466.96L824.2 466.96L819.6 466.96L815 466.96L810.4 466.96L805.8 466.96L801.2 466.96L796.6 466.96L792 466.96L787.4 466.96L782.8 466.96L778.2 466.96L773.6 466.96L769 466.96L764.4 466.96L759.8 466.96L755.2 466.96L750.59 466.96L745.99 466.96L741.39 466.96L736.79 466.96L732.19 466.96L727.59 466.96L722.99 466.96L718.39 466.96L713.79 466.96L709.19 466.96L704.59 466.96L699.99 466.96L695.39 466.96L690.79 466.96L686.19 466.96L681.59 466.96L676.99 466.96L672.39 466.96L667.79 466.96L663.19 466.96L658.59 466.96L653.99 466.96L649.39 466.96L644.79 466.96L640.19 466.96L635.59 466.96L630.99 466.96L626.39 466.96L621.79 466.96L617.19 466.96L612.59 466.96L607.99 466.96L603.39 466.96L598.79 466.96L594.19 466.96L589.59 466.96L584.99 466.96L580.39 466.96L575.79 466.96L571.19 466.96L566.59 466.96L561.99 466.96L557.39 466.96L552.79 466.96L548.19 466.96L543.59 466.96L538.99 466.96L534.39 466.96L529.79 466.96L525.19 466.96L520.59 466.96L515.99 466.96L511.39 466.96L506.79 466.96L502.19 466.96L497.59 466.96L492.99 466.96L488.39 466.96"/><path d="M1409.46 418.11L1403.83 418.11L1398.19 418.11L1392.56 418.11L1386.93 418.11L1381.29 418.11L1375.66 418.11L1370.02 418.11L1364.39 418.11L1358.76 418.11L1353.12 418.11L1347.49 418.11L1341.85 418.11L1336.22 418.11L1330.59 418.11L1324.95 418.11L1319.32 418.11L1313.68 418.11L1308.05 418.11L1302.42 418.11L1296.78 418.11L1291.15 418.11L1285.51 418.11L1279.88 418.11L1274.24 418.11L1268.61 418.11L1262.98 418.11L1257.34 418.11L1251.71 418.11L1246.07 418.11L1240.44 418.11L1234.81 418.11L1229.17 418.11L1223.54 418.11L1217.9 418.11L1212.27 418.11L1206.64 418.11L1201 418.11L1195.37 418.11L1189.73 418.11L1184.1 418.11L1178.47 418.11L1172.83 418.11L1167.2 418.11L1161.56 418.11L1155.93 418.11L1150.3 418.11L1144.66 418.11L1139.03 418.11L1133.39 418.11L1127.76 418.11L1122.13 418.11L1116.49 418.11L1110.86 418.11L1105.22 418.11L1099.59 418.11L1093.96 418.11L1088.32 418.11L1082.69 418.11L1077.05 418.11L1071.42 418.11L1065.79 418.11L1060.15 418.11L1054.52 418.11L1048.88 418.11L1043.25 418.11L1037.62 418.11L1031.98 418.11L1026.35 418.11L1020.71 418.11L1015.08 418.11L1009.45 418.11L1003.81 418.11L998.18 418.11L992.54 418.11L986.91 418.11L981.28 418.11L975.64 418.11L970.01 418.11L964.37 418.11L958.74 418.11L953.11 418.11L947.47 418.11L941.84 418.11L936.2 418.11L930.57 418.11L924.94 418.11L919.3 418.11L913.67 418.11L908.03 418.11L902.4 418.11L896.77 418.11L891.13 418.11L885.5 418.11L879.86 418.11L874.23 418.11L868.6 418.11L862.96 418.11L857.33 418.11L851.69 418.11L846.06 418.11L840.43 418.11L834.79 418.11L829.16 418.11L823.52 418.11L817.89 418.11L812.26 418.11L806.62 418.11L800.99 418.11L795.35 418.11L789.72 418.11L784.09 418.11L778.45 418.11L772.82 418.11L767.18 418.11L761.55 418.11L755.92 418.11L750.28 418.11L744.65 418.11L739.01 418.11L733.38 418.11L727.75 418.11L722.11 418.11L716.48 418.11L710.84 418.11L705.21 418.11L699.58 418.11L693.94 418.11L688.31 418.11L682.67 418.11L677.04 418.11L671.41 418.11L665.77 418.11L660.14 418.11L654.5 418.11L648.87 418.11L643.24 418.11L637.6 418.11L631.97 418.11L626.33 418.11L620.7 418.11L615.07 418.11L609.43 418.11L603.8 418.11L598.16 418.11L592.53 418.11L586.9 418.11L581.26 418.11L575.63 418.11L569.99 418.11L564.36 418.11L558.73 418.11L553.09 418.11L547.46 418.11L541.82 418.11L536.19 418.11L530.56 418.11L524.92 418.11L519.29 418.11L513.65 418.11L508.02 418.11L502.38 418.11L496.75 418.11L491.12 418.11L485.48 418.11L479.85 418.11L474.21 418.11L468.58 418.11L462.95 418.11L457.31 418.11L451.68 418.11L446.04 418.11L440.41 418.11L434.78 418.11L429.14 418.11L423.51 418.11L417.87 418.11L412.24 418.11L406.61 418.11L400.97 418.11L395.34 418.11"/><path d="M1467.95 369.25L1461.67 369.25L1455.39 369.25L1449.1 369.25L1442.82 369.25L1436.53 369.25L1430.25 369.25L1423.97 369.25L1417.68 369.25L1411.4 369.25L1405.11 369.25L1398.83 369.25L1392.55 369.25L1386.26 369.25L1379.98 369.25L1373.69 369.25L1367.41 369.25L1361.13 369.25L1354.84 369.25L1348.56 369.25L1342.27 369.25L1335.99 369.25L1329.71 369.25L1323.42 369.25L1317.14 369.25L1310.86 369.25L1304.57 369.25L1298.29 369.25L1292 369.25L1285.72 369.25L1279.44 369.25L1273.15 369.25L1266.87 369.25L1260.58 369.25L1254.3 369.25L1248.02 369.25L1241.73 369.25L1235.45 369.25L1229.16 369.25L1222.88 369.25L1216.6 369.25L1210.31 369.25L1204.03 369.25L1197.74 369.25L1191.46 369.25L1185.18 369.25L1178.89 369.25L1172.61 369.25L1166.32 369.25L1160.04 369.25L1153.76 369.25L1147.47 369.25L1141.19 369.25L1134.91 369.25L1128.62 369.25L1122.34 369.25L1116.05 369.25L1109.77 369.25L1103.49 369.25L1097.2 369.25L1090.92 369.25L1084.63 369.25L1078.35 369.25L1072.07 369.25L1065.78 369.25L1059.5 369.25L1053.21 369.25L1046.93 369.25L1040.65 369.25L1034.36 369.25L1028.08 369.25L1021.79 369.25L1015.51 369.25L1009.23 369.25L1002.94 369.25L996.66 369.25L990.37 369.25L984.09 369.25L977.81 369.25L971.52 369.25L965.24 369.25L958.96 369.25L952.67 369.25L946.39 369.25L940.1 369.25L933.82 369.25L927.54 369.25L921.25 369.25L914.97 369.25L908.68 369.25L902.4 369.25L896.12 369.25L889.83 369.25L883.55 369.25L877.26 369.25L870.98 369.25L864.7 369.25L858.41 369.25L852.13 369.25L845.84 369.25L839.56 369.25L833.28 369.25L826.99 369.25L820.71 369.25L814.43 369.25L808.14 369.25L801.86 369.25L795.57 369.25L789.29 369.25L783.01 369.25L776.72 369.25L770.44 369.25L764.15 369.25L757.87 369.25L751.59 369.25L745.3 369.25L739.02 369.25L732.73 369.25L726.45 369.25L720.17 369.25L713.88 369.25L707.6 369.25L701.31 369.25L695.03 369.25L688.75 369.25L682.46 369.25L676.18 369.25L669.89 369.25L663.61 369.25L657.33 369.25L651.04 369.25L644.76 369.25L638.48 369.25L632.19 369.25L625.91 369.25L619.62 369.25L613.34 369.25L607.06 369.25L600.77 369.25L594.49 369.25L588.2 369.25L581.92 369.25L575.64 369.25L569.35 369.25L563.07 369.25L556.78 369.25L550.5 369.25L544.22 369.25L537.93 369.25L531.65 369.25L525.36 369.25L519.08 369.25L512.8 369.25L506.51 369.25L500.23 369.25L493.94 369.25L487.66 369.25L481.38 369.25L475.09 369.25L468.81 369.25L462.53 369.25L456.24 369.25L449.96 369.25L443.67 369.25L437.39 369.25L431.11 369.25L424.82 369.25L418.54 369.25L412.25 369.25L405.97 369.25L399.69 369.25L393.4 369.25L387.12 369.25L380.83 369.25L374.55 369.25L368.27 369.25L361.98 369.25L355.7 369.25L349.41 369.25L343.13 369.25L336.85 369.25"/><path d="M1487.9 320.4L1481.4 320.4L1474.89 320.4L1468.39 320.4L1461.88 320.4L1455.38 320.4L1448.87 320.4L1442.36 320.4L1435.86 320.4L1429.35 320.4L1422.85 320.4L1416.34 320.4L1409.84 320.4L1403.33 320.4L1396.83 320.4L1390.32 320.4L1383.81 320.4L1377.31 320.4L1370.8 320.4L1364.3 320.4L1357.79 320.4L1351.29 320.4L1344.78 320.4L1338.28 320.4L1331.77 320.4L1325.26 320.4L1318.76 320.4L1312.25 320.4L1305.75 320.4L1299.24 320.4L1292.74 320.4L1286.23 320.4L1279.72 320.4L1273.22 320.4L1266.71 320.4L1260.21 320.4L1253.7 320.4L1247.2 320.4L1240.69 320.4L1234.19 320.4L1227.68 320.4L1221.17 320.4L1214.67 320.4L1208.16 320.4L1201.66 320.4L1195.15 320.4L1188.65 320.4L1182.14 320.4L1175.64 320.4L1169.13 320.4L1162.62 320.4L1156.12 320.4L1149.61 320.4L1143.11 320.4L1136.6 320.4L1130.1 320.4L1123.59 320.4L1117.08 320.4L1110.58 320.4L1104.07 320.4L1097.57 320.4L1091.06 320.4L1084.56 320.4L1078.05 320.4L1071.55 320.4L1065.04 320.4L1058.53 320.4L1052.03 320.4L1045.52 320.4L1039.02 320.4L1032.51 320.4L1026.01 320.4L1019.5 320.4L1013 320.4L1006.49 320.4L999.98 320.4L993.48 320.4L986.97 320.4L980.47 320.4L973.96 320.4L967.46 320.4L960.95 320.4L954.44 320.4L947.94 320.4L941.43 320.4L934.93 320.4L928.42 320.4L921.92 320.4L915.41 320.4L908.91 320.4L902.4 320.4L895.89 320.4L889.39 320.4L882.88 320.4L876.38 320.4L869.87 320.4L863.37 320.4L856.86 320.4L850.36 320.4L843.85 320.4L837.34 320.4L830.84 320.4L824.33 320.4L817.83 320.4L811.32 320.4L804.82 320.4L798.31 320.4L791.8 320.4L785.3 320.4L778.79 320.4L772.29 320.4L765.78 320.4L759.28 320.4L752.77 320.4L746.27 320.4L739.76 320.4L733.25 320.4L726.75 320.4L720.24 320.4L713.74 320.4L707.23 320.4L700.73 320.4L694.22 320.4L687.72 320.4L681.21 320.4L674.7 320.4L668.2 320.4L661.69 320.4L655.19 320.4L648.68 320.4L642.18 320.4L635.67 320.4L629.16 320.4L622.66 320.4L616.15 320.4L609.65 320.4L603.14 320.4L596.64 320.4L590.13 320.4L583.63 320.4L577.12 320.4L570.61 320.4L564.11 320.4L557.6 320.4L551.1 320.4L544.59 320.4L538.09 320.4L531.58 320.4L525.08 320.4L518.57 320.4L512.06 320.4L505.56 320.4L499.05 320.4L492.55 320.4L486.04 320.4L479.54 320.4L473.03 320.4L466.52 320.4L460.02 320.4L453.51 320.4L447.01 320.4L440.5 320.4L434 320.4L427.49 320.4L420.99 320.4L414.48 320.4L407.97 320.4L401.47 320.4L394.96 320.4L388.46 320.4L381.95 320.4L375.45 320.4L368.94 320.4L362.44 320.4L355.93 320.4L349.42 320.4L342.92 320.4L336.41 320.4L329.91 320.4L323.4 320.4L316.9 320.4"/><path d="M1467.95 271.54L1461.67 271.54L1455.39 271.54L1449.1 271.54L1442.82 271.54L1436.53 271.54L1430.25 271.54L1423.97 271.54L1417.68 271.54L1411.4 271.54L1405.11 271.54L1398.83 271.54L1392.55 271.54L1386.26 271.54L1379.98 271.54L1373.69 271.54L1367.41 271.54L1361.13 271.54L1354.84 271.54L1348.56 271.54L1342.27 271.54L1335.99 271.54L1329.71 271.54L1323.42 271.54L1317.14 271.54L1310.86 271.54L1304.57 271.54L1298.29 271.54L1292 271.54L1285.72 271.54L1279.44 271.54L1273.15 271.54L1266.87 271.54L1260.58 271.54L1254.3 271.54L1248.02 271.54L1241.73 271.54L1235.45 271.54L1229.16 271.54L1222.88 271.54L1216.6 271.54L1210.31 271.54L1204.03 271.54L1197.74 271.54L1191.46 271.54L1185.18 271.54L1178.89 271.54L1172.61 271.54L1166.32 271.54L1160.04 271.54L1153.76 271.54L1147.47 271.54L1141.19 271.54L1134.91 271.54L1128.62 271.54L1122.34 271.54L1116.05 271.54L1109.77 271.54L1103.49 271.54L1097.2 271.54L1090.92 271.54L1084.63 271.54L1078.35 271.54L1072.07 271.54L1065.78 271.54L1059.5 271.54L1053.21 271.54L1046.93 271.54L1040.65 271.54L1034.36 271.54L1028.08 271.54L1021.79 271.54L1015.51 271.54L1009.23 271.54L1002.94 271.54L996.66 271.54L990.37 271.54L984.09 271.54L977.81 271.54L971.52 271.54L965.24 271.54L958.96 271.54L952.67 271.54L946.39 271.54L940.1 271.54L933.82 271.54L927.54 271.54L921.25 271.54L914.97 271.54L908.68 271.54L902.4 271.54L896.12 271.54L889.83 271.54L883.55 271.54L877.26 271.54L870.98 271.54L864.7 271.54L858.41 271.54L852.13 271.54L845.84 271.54L839.56 271.54L833.28 271.54L826.99 271.54L820.71 271.54L814.43 271.54L808.14 271.54L801.86 271.54L795.57 271.54L789.29 271.54L783.01 271.54L776.72 271.54L770.44 271.54L764.15 271.54L757.87 271.54L751.59 271.54L745.3 271.54L739.02 271.54L732.73 271.54L726.45 271.54L720.17 271.54L713.88 271.54L707.6 271.54L701.31 271.54L695.03 271.54L688.75 271.54L682.46 271.54L676.18 271.54L669.89 271.54L663.61 271.54L657.33 271.54L651.04 271.54L644.76 271.54L638.48 271.54L632.19 271.54L625.91 271.54L619.62 271.54L613.34 271.54L607.06 271.54L600.77 271.54L594.49 271.54L588.2 271.54L581.92 271.54L575.64 271.54L569.35 271.54L563.07 271.54L556.78 271.54L550.5 271.54L544.22 271.54L537.93 271.54L531.65 271.54L525.36 271.54L519.08 271.54L512.8 271.54L506.51 271.54L500.23 271.54L493.94 271.54L487.66 271.54L481.38 271.54L475.09 271.54L468.81 271.54L462.53 271.54L456.24 271.54L449.96 271.54L443.67 271.54L437.39 271.54L431.11 271.54L424.82 271.54L418.54 271.54L412.25 271.54L405.97 271.54L399.69 271.54L393.4 271.54L387.12 271.54L380.83 271.54L374.55 271.54L368.27 271.54L361.98 271.54L355.7 271.54L349.41 271.54L343.13 271.54L336.85 271.54"/><path d="M1409.46 222.69L1403.83 222.69L1398.19 222.69L1392.56 222.69L1386.93 222.69L1381.29 222.69L1375.66 222.69L1370.02 222.69L1364.39 222.69L1358.76 222.69L1353.12 222.69L1347.49 222.69L1341.85 222.69L1336.22 222.69L1330.59 222.69L1324.95 222.69L1319.32 222.69L1313.68 222.69L1308.05 222.69L1302.42 222.69L1296.78 222.69L1291.15 222.69L1285.51 222.69L1279.88 222.69L1274.24 222.69L1268.61 222.69L1262.98 222.69L1257.34 222.69L1251.71 222.69L1246.07 222.69L1240.44 222.69L1234.81 222.69L1229.17 222.69L1223.54 222.69L1217.9 222.69L1212.27 222.69L1206.64 222.69L1201 222.69L1195.37 222.69L1189.73 222.69L1184.1 222.69L1178.47 222.69L1172.83 222.69L1167.2 222.69L1161.56 222.69L1155.93 222.69L1150.3 222.69L1144.66 222.69L1139.03 222.69L1133.39 222.69L1127.76 222.69L1122.13 222.69L1116.49 222.69L1110.86 222.69L1105.22 222.69L1099.59 222.69L1093.96 222.69L1088.32 222.69L1082.69 222.69L1077.05 222.69L1071.42 222.69L1065.79 222.69L1060.15 222.69L1054.52 222.69L1048.88 222.69L1043.25 222.69L1037.62 222.69L1031.98 222.69L1026.35 222.69L1020.71 222.69L1015.08 222.69L1009.45 222.69L1003.81 222.69L998.18 222.69L992.54 222.69L986.91 222.69L981.28 222.69L975.64 222.69L970.01 222.69L964.37 222.69L958.74 222.69L953.11 222.69L947.47 222.69L941.84 222.69L936.2 222.69L930.57 222.69L924.94 222.69L919.3 222.69L913.67 222.69L908.03 222.69L902.4 222.69L896.77 222.69L891.13 222.69L885.5 222.69L879.86 222.69L874.23 222.69L868.6 222.69L862.96 222.69L857.33 222.69L851.69 222.69L846.06 222.69L840.43 222.69L834.79 222.69L829.16 222.69L823.52 222.69L817.89 222.69L812.26 222.69L806.62 222.69L800.99 222.69L795.35 222.69L789.72 222.69L784.09 222.69L778.45 222.69L772.82 222.69L767.18 222.69L761.55 222.69L755.92 222.69L750.28 222.69L744.65 222.69L739.01 222.69L733.38 222.69L727.75 222.69L722.11 222.69L716.48 222.69L710.84 222.69L705.21 222.69L699.58 222.69L693.94 222.69L688.31 222.69L682.67 222.69L677.04 222.69L671.41 222.69L665.77 222.69L660.14 222.69L654.5 222.69L648.87 222.69L643.24 222.69L637.6 222.69L631.97 222.69L626.33 222.69L620.7 222.69L615.07 222.69L609.43 222.69L603.8 222.69L598.16 222.69L592.53 222.69L586.9 222.69L581.26 222.69L575.63 222.69L569.99 222.69L564.36 222.69L558.73 222.69L553.09 222.69L547.46 222.69L541.82 222.69L536.19 222.69L530.56 222.69L524.92 222.69L519.29 222.69L513.65 222.69L508.02 222.69L502.38 222.69L496.75 222.69L491.12 222.69L485.48 222.69L479.85 222.69L474.21 222.69L468.58 222.69L462.95 222.69L457.31 222.69L451.68 222.69L446.04 222.69L440.41 222.69L434.78 222.69L429.14 222.69L423.51 222.69L417.87 222.69L412.24 222.69L406.61 222.69L400.97 222.69L395.34 222.69"/><path d="M1316.41 173.83L1311.81 173.83L1307.21 173.83L1302.61 173.83L1298.01 173.83L1293.41 173.83L1288.81 173.83L1284.21 173.83L1279.61 173.83L1275.01 173.83L1270.41 173.83L1265.81 173.83L1261.21 173.83L1256.61 173.83L1252.01 173.83L1247.41 173.83L1242.81 173.83L1238.21 173.83L1233.61 173.83L1229.01 173.83L1224.41 173.83L1219.81 173.83L1215.21 173.83L1210.61 173.83L1206.01 173.83L1201.41 173.83L1196.81 173.83L1192.21 173.83L1187.61 173.83L1183.01 173.83L1178.41 173.83L1173.81 173.83L1169.21 173.83L1164.61 173.83L1160.01 173.83L1155.41 173.83L1150.81 173.83L1146.21 173.83L1141.61 173.83L1137.01 173.83L1132.41 173.83L1127.81 173.83L1123.21 173.83L1118.61 173.83L1114.01 173.83L1109.41 173.83L1104.81 173.83L1100.21 173.83L1095.61 173.83L1091.01 173.83L1086.41 173.83L1081.81 173.83L1077.21 173.83L1072.61 173.83L1068.01 173.83L1063.41 173.83L1058.81 173.83L1054.21 173.83L1049.6 173.83L1045 173.83L1040.4 173.83L1035.8 173.83L1031.2 173.83L1026.6 173.83L1022 173.83L1017.4 173.83L1012.8 173.83L1008.2 173.83L1003.6 173.83L999 173.83L994.4 173.83L989.8 173.83L985.2 173.83L980.6 173.83L976 173.83L971.4 173.83L966.8 173.83L962.2 173.83L957.6 173.83L953 173.83L948.4 173.83L943.8 173.83L939.2 173.83L934.6 173.83L930 173.83L925.4 173.83L920.8 173.83L916.2 173.83L911.6 173.83L907 173.83L902.4 173.83L897.8 173.83L893.2 173.83L888.6 173.83L884 173.83L879.4 173.83L874.8 173.83L870.2 173.83L865.6 173.83L861 173.83L856.4 173.83L851.8 173.83L847.2 173.83L842.6 173.83L838 173.83L833.4 173.83L828.8 173.83L824.2 173.83L819.6 173.83L815 173.83L810.4 173.83L805.8 173.83L801.2 173.83L796.6 173.83L792 173.83L787.4 173.83L782.8 173.83L778.2 173.83L773.6 173.83L769 173.83L764.4 173.83L759.8 173.83L755.2 173.83L750.59 173.83L745.99 173.83L741.39 173.83L736.79 173.83L732.19 173.83L727.59 173.83L722.99 173.83L718.39 173.83L713.79 173.83L709.19 173.83L704.59 173.83L699.99 173.83L695.39 173.83L690.79 173.83L686.19 173.83L681.59 173.83L676.99 173.83L672.39 173.83L667.79 173.83L663.19 173.83L658.59 173.83L653.99 173.83L649.39 173.83L644.79 173.83L640.19 173.83L635.59 173.83L630.99 173.83L626.39 173.83L621.79 173.83L617.19 173.83L612.59 173.83L607.99 173.83L603.39 173.83L598.79 173.83L594.19 173.83L589.59 173.83L584.99 173.83L580.39 173.83L575.79 173.83L571.19 173.83L566.59 173.83L561.99 173.83L557.39 173.83L552.79 173.83L548.19 173.83L543.59 173.83L538.99 173.83L534.39 173.83L529.79 173.83L525.19 173.83L520.59 173.83L515.99 173.83L511.39 173.83L506.79 173.83L502.19 173.83L497.59 173.83L492.99 173.83L488.39 173.83"/><path d="M1195.15 124.98L1191.9 124.98L1188.65 124.98L1185.39 124.98L1182.14 124.98L1178.89 124.98L1175.64 124.98L1172.38 124.98L1169.13 124.98L1165.88 124.98L1162.62 124.98L1159.37 124.98L1156.12 124.98L1152.87 124.98L1149.61 124.98L1146.36 124.98L1143.11 124.98L1139.85 124.98L1136.6 124.98L1133.35 124.98L1130.1 124.98L1126.84 124.98L1123.59 124.98L1120.34 124.98L1117.08 124.98L1113.83 124.98L1110.58 124.98L1107.33 124.98L1104.07 124.98L1100.82 124.98L1097.57 124.98L1094.32 124.98L1091.06 124.98L1087.81 124.98L1084.56 124.98L1081.3 124.98L1078.05 124.98L1074.8 124.98L1071.55 124.98L1068.29 124.98L1065.04 124.98L1061.79 124.98L1058.53 124.98L1055.28 124.98L1052.03 124.98L1048.78 124.98L1045.52 124.98L1042.27 124.98L1039.02 124.98L1035.76 124.98L1032.51 124.98L1029.26 124.98L1026.01 124.98L1022.75 124.98L1019.5 124.98L1016.25 124.98L1013 124.98L1009.74 124.98L1006.49 124.98L1003.24 124.98L999.98 124.98L996.73 124.98L993.48 124.98L990.23 124.98L986.97 124.98L983.72 124.98L980.47 124.98L977.21 124.98L973.96 124.98L970.71 124.98L967.46 124.98L964.2 124.98L960.95 124.98L957.7 124.98L954.44 124.98L951.19 124.98L947.94 124.98L944.69 124.98L941.43 124.98L938.18 124.98L934.93 124.98L931.68 124.98L928.42 124.98L925.17 124.98L921.92 124.98L918.66 124.98L915.41 124.98L912.16 124.98L908.91 124.98L905.65 124.98L902.4 124.98L899.15 124.98L895.89 124.98L892.64 124.98L889.39 124.98L886.14 124.98L882.88 124.98L879.63 124.98L876.38 124.98L873.12 124.98L869.87 124.98L866.62 124.98L863.37 124.98L860.11 124.98L856.86 124.98L853.61 124.98L850.36 124.98L847.1 124.98L843.85 124.98L840.6 124.98L837.34 124.98L834.09 124.98L830.84 124.98L827.59 124.98L824.33 124.98L821.08 124.98L817.83 124.98L814.57 124.98L811.32 124.98L808.07 124.98L804.82 124.98L801.56 124.98L798.31 124.98L795.06 124.98L791.8 124.98L788.55 124.98L785.3 124.98L782.05 124.98L778.79 124.98L775.54 124.98L772.29 124.98L769.04 124.98L765.78 124.98L762.53 124.98L759.28 124.98L756.02 124.98L752.77 124.98L749.52 124.98L746.27 124.98L743.01 124.98L739.76 124.98L736.51 124.98L733.25 124.98L730 124.98L726.75 124.98L723.5 124.98L720.24 124.98L716.99 124.98L713.74 124.98L710.48 124.98L707.23 124.98L703.98 124.98L700.73 124.98L697.47 124.98L694.22 124.98L690.97 124.98L687.72 124.98L684.46 124.98L681.21 124.98L677.96 124.98L674.7 124.98L671.45 124.98L668.2 124.98L664.95 124.98L661.69 124.98L658.44 124.98L655.19 124.98L651.93 124.98L648.68 124.98L645.43 124.98L642.18 124.98L638.92 124.98L635.67 124.98L632.42 124.98L629.16 124.98L625.91 124.98L622.66 124.98L619.41 124.98L616.15 124.98L612.9 124.98L609.65 124.98"/><path d="M1053.94 76.12L1052.26 76.12L1050.57 76.12L1048.89 76.12L1047.2 76.12L1045.52 76.12L1043.84 76.12L1042.15 76.12L1040.47 76.12L1038.79 76.12L1037.1 76.12L1035.42 76.12L1033.73 76.12L1032.05 76.12L1030.37 76.12L1028.68 76.12L1027 76.12L1025.32 76.12L1023.63 76.12L1021.95 76.12L1020.26 76.12L1018.58 76.12L1016.9 76.12L1015.21 76.12L1013.53 76.12L1011.85 76.12L1010.16 76.12L1008.48 76.12L1006.79 76.12L1005.11 76.12L1003.43 76.12L1001.74 76.12L1000.06 76.12L998.38 76.12L996.69 76.12L995.01 76.12L993.32 76.12L991.64 76.12L989.96 76.12L988.27 76.12L986.59 76.12L984.9 76.12L983.22 76.12L981.54 76.12L979.85 76.12L978.17 76.12L976.49 76.12L974.8 76.12L973.12 76.12L971.43 76.12L969.75 76.12L968.07 76.12L966.38 76.12L964.7 76.12L963.02 76.12L961.33 76.12L959.65 76.12L957.96 76.12L956.28 76.12L954.6 76.12L952.91 76.12L951.23 76.12L949.55 76.12L947.86 76.12L946.18 76.12L944.49 76.12L942.81 76.12L941.13 76.12L939.44 76.12L937.76 76.12L936.08 76.12L934.39 76.12L932.71 76.12L931.02 76.12L929.34 76.12L927.66 76.12L925.97 76.12L924.29 76.12L922.61 76.12L920.92 76.12L919.24 76.12L917.55 76.12L915.87 76.12L914.19 76.12L912.5 76.12L910.82 76.12L909.14 76.12L907.45 76.12L905.77 76.12L904.08 76.12L902.4 76.12L900.72 76.12L899.03 76.12L897.35 76.12L895.66 76.12L893.98 76.12L892.3 76.12L890.61 76.12L888.93 76.12L887.25 76.12L885.56 76.12L883.88 76.12L882.19 76.12L880.51 76.12L878.83 76.12L877.14 76.12L875.46 76.12L873.78 76.12L872.09 76.12L870.41 76.12L868.72 76.12L867.04 76.12L865.36 76.12L863.67 76.12L861.99 76.12L860.31 76.12L858.62 76.12L856.94 76.12L855.25 76.12L853.57 76.12L851.89 76.12L850.2 76.12L848.52 76.12L846.84 76.12L845.15 76.12L843.47 76.12L841.78 76.12L840.1 76.12L838.42 76.12L836.73 76.12L835.05 76.12L833.37 76.12L831.68 76.12L830 76.12L828.31 76.12L826.63 76.12L824.95 76.12L823.26 76.12L821.58 76.12L819.9 76.12L818.21 76.12L816.53 76.12L814.84 76.12L813.16 76.12L811.48 76.12L809.79 76.12L808.11 76.12L806.42 76.12L804.74 76.12L803.06 76.12L801.37 76.12L799.69 76.12L798.01 76.12L796.32 76.12L794.64 76.12L792.95 76.12L791.27 76.12L789.59 76.12L787.9 76.12L786.22 76.12L784.54 76.12L782.85 76.12L781.17 76.12L779.48 76.12L777.8 76.12L776.12 76.12L774.43 76.12L772.75 76.12L771.07 76.12L769.38 76.12L767.7 76.12L766.01 76.12L764.33 76.12L762.65 76.12L760.96 76.12L759.28 76.12L757.6 76.12L755.91 76.12L754.23 76.12L752.54 76.12L750.86 76.12"/></g>
<path d="M427.93 258.09L431.88 256.71L435.84 255.34L439.81 253.99L443.79 252.66L447.78 251.34L451.78 250.04L455.78 248.75L459.79 247.48L463.8 246.23L467.82 244.99L471.83 243.77L475.85 242.57L479.86 241.39L483.87 240.23L487.88 239.09L491.88 237.96L495.87 236.86L499.86 235.78L503.83 234.72L507.8 233.69L511.75 232.67L515.7 231.68L519.62 230.71L523.54 229.76L527.43 228.84L531.31 227.94L535.17 227.07L539.02 226.22L542.84 225.4L546.64 224.6L550.42 223.83L554.17 223.09L557.91 222.37L561.61 221.68L565.3 221.02L568.95 220.39L572.58 219.78L576.19 219.21L579.76 218.66L583.31 218.15L586.83 217.66L590.32 217.2L593.78 216.77L597.21 216.38L600.61 216.01L603.98 215.67L607.32 215.37L610.63 215.1L613.9 214.85L617.15 214.64L620.37 214.47L623.56 214.32L626.71 214.2L629.84 214.12L632.94 214.07L636.01 214.05L639.04 214.06L642.05 214.11L645.03 214.19L647.99 214.3L650.91 214.44L653.81 214.61L656.68 214.81L659.52 215.05L662.34 215.32L665.14 215.62L667.91 215.95L670.66 216.31L673.38 216.7L676.08 217.12L678.76 217.57L681.42 218.05L684.06 218.57L686.68 219.11L689.29 219.68L691.87 220.28L694.44 220.91L696.99 221.56L699.53 222.25L702.05 222.96L704.56 223.7L707.05 224.46L709.53 225.25L712.01 226.07L714.47 226.91L716.92 227.78L719.36 228.68L721.79 229.59L724.22 230.53L726.64 231.5L729.05 232.49L731.45 233.5L733.85 234.53L736.25 235.59L738.64 236.67L741.03 237.76L743.42 238.88L745.8 240.02L748.19 241.18L750.57 242.36L752.95 243.55L755.33 244.77L757.71 246L760.09 247.25L762.47 248.52L764.86 249.8L767.24 251.1L769.63 252.42L772.02 253.75L774.41 255.1L776.81 256.46L779.21 257.84L781.61 259.23L784.02 260.63L786.43 262.05L788.85 263.47L791.27 264.92L793.69 266.37L796.12 267.83M512.34 256.61L513.07 257.84L513.81 259.08L514.57 260.32L515.34 261.56L516.13 262.82L516.93 264.07L517.74 265.33L518.57 266.6L519.42 267.86L520.28 269.14L521.15 270.41L522.04 271.69L522.95 272.98L523.87 274.27L524.81 275.56L525.77 276.85L526.74 278.15L527.73 279.45L528.74 280.75L529.76 282.06L530.81 283.37L531.86 284.68L532.94 285.99L534.03 287.31L535.14 288.63L536.27 289.95L537.42 291.27L538.58 292.6L539.76 293.93L540.96 295.26L542.18 296.59L543.41 297.92L544.66 299.26L545.94 300.59L547.22 301.93L548.53 303.27L549.86 304.61L551.2 305.95L552.56 307.29L553.94 308.63L555.34 309.98L556.75 311.32L558.18 312.67L559.64 314.01L561.1 315.36L562.59 316.71L564.09 318.05L565.62 319.4L567.15 320.75L568.71 322.09L570.29 323.44L571.88 324.79L573.48 326.13L575.11 327.48L576.75 328.82L578.41 330.17L580.09 331.51L581.78 332.86L583.49 334.2L585.22 335.54L586.96 336.88L588.72 338.22L590.49 339.56L592.28 340.89L594.08 342.23L595.91 343.56L597.74 344.9L599.59 346.23L601.46 347.55L603.34 348.88L605.24 350.21L607.15 351.53L609.07 352.85L611.01 354.17L612.96 355.48L614.92 356.8L616.9 358.11L618.9 359.41L620.9 360.72L622.92 362.02L624.95 363.32L626.99 364.62L629.05 365.91L631.11 367.2L633.19 368.48L635.28 369.77L637.38 371.04L639.49 372.32L641.62 373.59L643.75 374.85L645.89 376.12L648.05 377.37L650.21 378.63L652.38 379.88L654.56 381.12L656.75 382.36L658.95 383.6L661.15 384.83L663.37 386.05L665.59 387.27L667.82 388.48L670.06 389.69L672.3 390.89L674.55 392.09L676.81 393.28L679.07 394.46L681.34 395.64L683.61 396.81L685.89 397.98L688.18 399.13L690.47 400.28L692.76 401.43L695.06 402.57L697.36 403.7L699.66 404.82L701.97 405.93L704.28 407.04L706.59 408.14L708.91 409.23M514.39 304.06L515.97 300.9L517.66 297.75L519.46 294.6L521.37 291.45L523.39 288.29L525.52 285.14L527.75 281.99L530.09 278.85L532.53 275.7L535.08 272.55L537.73 269.41L540.49 266.26L543.35 263.12L546.3 259.98L549.36 256.84L552.52 253.71L555.77 250.57L559.12 247.44L562.56 244.31L566.1 241.18L569.73 238.06L573.45 234.94L577.26 231.82L581.16 228.7L585.14 225.59L589.21 222.48L593.36 219.38L597.6 216.27L601.91 213.18L606.3 210.08L610.77 207L615.31 203.91L619.93 200.83L624.61 197.76L629.37 194.7L634.19 191.64L639.07 188.58L644.02 185.54L649.02 182.5L654.08 179.47L659.2 176.44L664.37 173.43L669.59 170.43L674.85 167.43L680.16 164.45L685.51 161.48L690.9 158.52L696.32 155.58L701.78 152.65L707.26 149.74L712.77 146.84L718.29 143.96L723.84 141.1L729.4 138.26L734.96 135.44L740.53 132.65L746.11 129.89L751.67 127.15L757.23 124.44L762.76 121.77L768.28 119.14L773.77 116.54L779.23 113.99L784.64 111.49L790.01 109.04L795.33 106.64L800.58 104.31L805.77 102.05L810.87 99.86L815.89 97.75L820.82 95.73L825.65 93.81L830.36 92L834.97 90.3L839.44 88.72L843.79 87.28L848.01 85.98L852.09 84.84L856.04 83.86L859.85 83.05L863.52 82.43L867.07 81.98L870.51 81.73L873.83 81.67L877.05 81.81L880.19 82.13L883.25 82.65L886.25 83.35L889.2 84.22L892.11 85.27L895 86.47L897.87 87.83L900.73 89.32L903.58 90.95L906.44 92.7L909.3 94.55L912.18 96.51L915.06 98.57L917.96 100.71L920.87 102.93L923.79 105.22L926.73 107.58L929.68 109.99L932.64 112.46L935.62 114.99L938.6 117.56L941.6 120.17L944.6 122.82L947.6 125.5L950.61 128.22L953.62 130.97L956.64 133.74L959.65 136.54L962.66 139.37L965.67 142.22L968.67 145.09L971.67 147.97L974.66 150.88L977.63 153.8M440.12 320.3L441.87 320.93L443.61 321.55L445.36 322.18L447.12 322.8L448.88 323.43L450.65 324.05L452.42 324.68L454.2 325.3L455.98 325.93L457.77 326.55L459.56 327.17L461.36 327.8L463.16 328.42L464.97 329.04L466.78 329.66L468.59 330.28L470.41 330.9L472.24 331.51L474.07 332.13L475.9 332.75L477.74 333.36L479.59 333.97L481.43 334.59L483.29 335.2L485.14 335.81L487 336.41L488.87 337.02L490.73 337.63L492.61 338.23L494.48 338.83L496.36 339.43L498.25 340.03L500.14 340.63L502.03 341.23L503.92 341.82L505.82 342.41L507.72 343L509.63 343.59L511.54 344.17L513.45 344.76L515.37 345.34L517.29 345.92L519.21 346.49L521.13 347.07L523.06 347.64L524.99 348.21L526.92 348.78L528.86 349.34L530.8 349.91L532.74 350.46L534.68 351.02L536.63 351.58L538.58 352.13L540.53 352.67L542.48 353.22L544.43 353.76L546.39 354.3L548.35 354.84L550.31 355.37L552.27 355.9L554.23 356.43L556.2 356.95L558.16 357.47L560.13 357.99L562.1 358.5L564.07 359.01L566.04 359.52L568.01 360.02L569.99 360.52L571.96 361.01L573.94 361.5L575.91 361.99L577.89 362.47L579.87 362.95L581.84 363.43L583.82 363.9L585.8 364.37L587.78 364.83L589.76 365.29L591.74 365.75L593.72 366.2L595.7 366.64L597.68 367.09L599.65 367.52L601.63 367.96L603.61 368.39L605.59 368.81L607.57 369.23L609.54 369.64L611.52 370.05L613.5 370.46L615.47 370.86L617.45 371.26L619.42 371.65L621.39 372.03L623.37 372.41L625.34 372.79L627.31 373.16L629.27 373.52L631.24 373.88L633.21 374.24L635.17 374.59L637.14 374.93L639.1 375.27L641.06 375.61L643.02 375.94L644.98 376.26L646.93 376.58L648.89 376.89L650.84 377.2L652.79 377.5L654.74 377.79L656.69 378.08L658.63 378.36L660.58 378.64L662.52 378.91L664.46 379.18L666.4 379.44L668.34 379.7" fill="none" stroke="#5a5a5a" stroke-width="1.2" stroke-dasharray="1.39 2.29"/>
<path d="M398.4 269.7L428 257.9M508.3 251.1L512.2 256.7M513.9 303.9L503.9 330.6M431.2 319.7L439.6 321.8" fill="none" stroke="#6e6e6e" stroke-width="1.6"/>
<path d="M469.23 271.79L469.74 270.16L470.28 268.53L470.85 266.9L471.46 265.27L472.1 263.64L472.77 262.01L473.47 260.38L474.2 258.75L474.97 257.12L475.77 255.49L476.6 253.87L477.46 252.24L478.36 250.62L479.28 248.99L480.24 247.37L481.23 245.74L482.25 244.12L483.3 242.5L484.38 240.88L485.5 239.25L486.64 237.63L487.82 236.01L489.02 234.4L490.26 232.78L491.52 231.16L492.81 229.55L494.14 227.93L495.49 226.32L496.88 224.7L498.29 223.09L499.73 221.48L501.2 219.87L502.7 218.26L504.22 216.65L505.78 215.05L507.36 213.44L508.97 211.84L510.6 210.23L512.27 208.63L513.96 207.03L515.68 205.43L517.42 203.83L519.19 202.24L520.98 200.64L522.8 199.05L524.65 197.46L526.52 195.87L528.41 194.28L530.33 192.7L532.28 191.11L534.24 189.53L536.23 187.95L538.25 186.37L540.28 184.79L542.34 183.22L544.42 181.65L546.52 180.08L548.64 178.51L550.78 176.95L552.94 175.38L555.12 173.82L557.32 172.27L559.54 170.71L561.78 169.16L564.03 167.61L566.31 166.07L568.59 164.53L570.9 162.99L573.22 161.45L575.56 159.92L577.91 158.39L580.27 156.87L582.65 155.35L585.04 153.83L587.44 152.32L589.85 150.81L592.28 149.31L594.71 147.81L597.15 146.32L599.6 144.83L602.06 143.35L604.52 141.87L606.99 140.4L609.47 138.94L611.94 137.48L614.42 136.02L616.91 134.58L619.39 133.14L621.87 131.71L624.35 130.28L626.83 128.87L629.3 127.46L631.76 126.06L634.22 124.67L636.67 123.29L639.11 121.92L641.54 120.56L643.95 119.21L646.35 117.88L648.73 116.55L651.09 115.24L653.43 113.93L655.74 112.65L658.03 111.37L660.29 110.12L662.52 108.87L664.71 107.64L666.87 106.43L668.99 105.24L671.07 104.07L673.1 102.91L675.08 101.78M1125.78 100.67L1121.32 99.57L1116.92 98.51L1112.58 97.46L1108.31 96.44L1104.11 95.45L1099.98 94.49" fill="none" stroke="#81d34d" stroke-width="1.5" stroke-dasharray="1.6 2.7"/>
<path d="M510.45 287.72L512.37 285.82L514.32 283.91L516.31 282.01L518.35 280.11L520.42 278.22L522.53 276.32L524.68 274.43L526.86 272.54L529.09 270.65L531.35 268.76L533.65 266.88L535.98 264.99L538.35 263.11L540.75 261.24L543.19 259.36L545.67 257.49L548.18 255.62L550.72 253.75L553.29 251.89L555.9 250.03L558.54 248.17L561.21 246.32L563.91 244.47L566.64 242.62L569.4 240.78L572.19 238.95L575.01 237.11L577.85 235.28L580.73 233.46L583.63 231.64L586.55 229.82L589.5 228.01L592.48 226.21L595.48 224.41L598.51 222.61L601.55 220.82L604.62 219.04L607.71 217.26L610.82 215.49L613.95 213.73L617.1 211.97L620.27 210.22L623.45 208.47L626.65 206.74L629.87 205.01L633.11 203.29L636.35 201.57L639.61 199.87L642.89 198.17L646.17 196.49L649.47 194.81L652.77 193.14L656.09 191.48L659.41 189.84L662.74 188.2L666.08 186.57L669.42 184.96L672.77 183.35L676.12 181.76L679.47 180.18L682.83 178.61L686.18 177.06L689.54 175.52L692.89 174L696.24 172.49L699.59 170.99L702.93 169.51L706.26 168.05L709.59 166.6L712.92 165.17L716.23 163.76L719.53 162.36L722.83 160.99L726.11 159.63L729.38 158.3L732.63 156.98L735.87 155.69L739.09 154.42L742.3 153.17L745.48 151.94L748.65 150.74L751.8 149.57L754.93 148.42L758.03 147.29L761.11 146.19L764.17 145.13L767.2 144.09L770.21 143.08L773.19 142.1L776.15 141.15L779.08 140.23L781.97 139.35L784.84 138.49L787.68 137.68L790.49 136.9L793.27 136.15L796.02 135.44L798.74 134.77L801.43 134.14L804.08 133.54L806.71 132.99L809.3 132.47L811.86 131.99L814.39 131.56L816.89 131.17L819.36 130.82L821.8 130.51L824.2 130.25L826.58 130.03L828.93 129.85L831.25 129.71L833.55 129.62L835.82 129.58L838.06 129.58L840.28 129.62L842.47 129.71L844.64 129.84L846.79 130.01L848.91 130.23" fill="none" stroke="#2ab07f" stroke-width="1.5" stroke-dasharray="1.6 2.7"/>
<path d="M469.2 271.8 Q472.5 261 477.6 252.2" fill="none" stroke="#81d34d" stroke-width="2"/>
<path d="M510.8 288 L519.8 279" fill="none" stroke="#2ab07f" stroke-width="2"/>
<circle cx="469.2" cy="271.8" r="1.4" fill="#f0643c"/><circle cx="510.8" cy="288" r="1.4" fill="#f0643c"/>
<path d="M631.1 116.4L632.91 116.01L635.24 115.54L638.01 114.98L641.13 114.33L644.53 113.59L648.13 112.74L651.84 111.78L655.6 110.7L659.51 109.47L663.7 108.07L668.1 106.55L672.66 104.93L677.3 103.24L681.96 101.54L686.58 99.85L691.1 98.2L695.61 96.55L700.2 94.83L704.84 93.08L709.46 91.33L714 89.6L718.43 87.93L722.68 86.36L726.7 84.9L730.54 83.56L734.26 82.3L737.86 81.12L741.31 80.01L744.59 78.95L747.7 77.93L750.61 76.95L753.3 76L755.81 75.05L758.16 74.11L760.33 73.2L762.31 72.34L764.09 71.55L765.64 70.85L766.95 70.26L768 69.8" fill="none" stroke="#81d34d" stroke-width="2.3" stroke-linecap="round"/>
<path d="M1034 69.5L1033.44 69.56L1032.62 69.63L1031.64 69.71L1030.59 69.81L1029.56 69.93L1028.64 70.09L1027.93 70.27L1027.5 70.5L1027.26 70.74L1027.08 70.97L1027.01 71.21L1027.09 71.5L1027.39 71.85L1027.93 72.28L1028.79 72.82L1030 73.5L1031.53 74.29L1033.3 75.18L1035.34 76.15L1037.66 77.22L1040.27 78.39L1043.18 79.65L1046.42 81.02L1050 82.5L1054.04 84.15L1058.59 86L1063.54 87.99L1068.75 90.06L1074.12 92.16L1079.53 94.22L1084.86 96.19L1090 98L1095.07 99.69L1100.23 101.34L1105.44 102.93L1110.62 104.47L1115.73 105.95L1120.7 107.36L1125.48 108.72L1130 110L1134.34 111.26L1138.58 112.51L1142.69 113.72L1146.62 114.86L1150.36 115.89L1153.86 116.78L1157.08 117.5L1160 118L1162.61 118.23L1164.95 118.2L1167.04 117.96L1168.88 117.6L1170.48 117.17L1171.86 116.75L1173.03 116.41L1174 116.2" fill="none" stroke="#81d34d" stroke-width="2.3" stroke-linecap="round"/>
<ellipse cx="855.19" cy="116.05" rx="20.76" ry="31.27" transform="rotate(53.20 855.19 116.05)" fill="none" stroke="#2ab07f" stroke-width="2.2"/>
<path d="M845 131.3 H851.6 M848.3 128 V134.6" stroke="#ff0000" stroke-width="1.6"/>
<path d="M1097.6 92.1 L1102.4 96.9 M1102.4 92.1 L1097.6 96.9" stroke="#ff0000" stroke-width="1.6"/>
<text x="844.69" y="118.70" font-size="11.77" fill="#fff" textLength="22.56" lengthAdjust="spacingAndGlyphs">DPC</text>
<text x="1087.27" y="97.00" font-size="11.77" fill="#fff" textLength="24.09" lengthAdjust="spacingAndGlyphs">DKD</text>
<text x="890.64" y="25.50" font-size="10.28" fill="#747474" textLength="19.83" lengthAdjust="spacingAndGlyphs">+90</text>
<circle cx="914.21" cy="18.30" r="1.0" fill="none" stroke="#747474" stroke-width="0.75"/>
<text x="890.64" y="123.00" font-size="10.28" fill="#747474" textLength="19.83" lengthAdjust="spacingAndGlyphs">+60</text>
<circle cx="914.21" cy="115.80" r="1.0" fill="none" stroke="#747474" stroke-width="0.75"/>
<text x="890.64" y="220.50" font-size="10.28" fill="#747474" textLength="19.83" lengthAdjust="spacingAndGlyphs">+30</text>
<circle cx="914.21" cy="213.30" r="1.0" fill="none" stroke="#747474" stroke-width="0.75"/>
<text x="890.64" y="428.50" font-size="10.28" fill="#747474" textLength="19.83" lengthAdjust="spacingAndGlyphs">−30</text>
<circle cx="914.21" cy="421.30" r="1.0" fill="none" stroke="#747474" stroke-width="0.75"/>
<text x="890.64" y="526.50" font-size="10.28" fill="#747474" textLength="19.83" lengthAdjust="spacingAndGlyphs">−60</text>
<circle cx="914.21" cy="519.30" r="1.0" fill="none" stroke="#747474" stroke-width="0.75"/>
<text x="890.64" y="624.00" font-size="10.28" fill="#747474" textLength="19.83" lengthAdjust="spacingAndGlyphs">−90</text>
<circle cx="914.21" cy="616.80" r="1.0" fill="none" stroke="#747474" stroke-width="0.75"/>
<text x="1471.17" y="330.00" font-size="10.28" fill="#747474" textLength="25.96" lengthAdjust="spacingAndGlyphs">+180</text>
<circle cx="1500.89" cy="322.80" r="1.0" fill="none" stroke="#747474" stroke-width="0.75"/>
<text x="1373.58" y="330.00" font-size="10.28" fill="#747474" textLength="25.96" lengthAdjust="spacingAndGlyphs">+210</text>
<circle cx="1403.31" cy="322.80" r="1.0" fill="none" stroke="#747474" stroke-width="0.75"/>
<text x="1276.00" y="330.00" font-size="10.28" fill="#747474" textLength="25.96" lengthAdjust="spacingAndGlyphs">+240</text>
<circle cx="1305.72" cy="322.80" r="1.0" fill="none" stroke="#747474" stroke-width="0.75"/>
<text x="1178.42" y="330.00" font-size="10.28" fill="#747474" textLength="25.96" lengthAdjust="spacingAndGlyphs">+270</text>
<circle cx="1208.14" cy="322.80" r="1.0" fill="none" stroke="#747474" stroke-width="0.75"/>
<text x="1080.83" y="330.00" font-size="10.28" fill="#747474" textLength="25.96" lengthAdjust="spacingAndGlyphs">+300</text>
<circle cx="1110.56" cy="322.80" r="1.0" fill="none" stroke="#747474" stroke-width="0.75"/>
<text x="983.25" y="330.00" font-size="10.28" fill="#747474" textLength="25.96" lengthAdjust="spacingAndGlyphs">+330</text>
<circle cx="1012.97" cy="322.80" r="1.0" fill="none" stroke="#747474" stroke-width="0.75"/>
<text x="893.61" y="330.00" font-size="10.28" fill="#747474" textLength="13.65" lengthAdjust="spacingAndGlyphs">+0</text>
<circle cx="911.02" cy="322.80" r="1.0" fill="none" stroke="#747474" stroke-width="0.75"/>
<text x="791.15" y="330.00" font-size="10.28" fill="#747474" textLength="19.83" lengthAdjust="spacingAndGlyphs">+30</text>
<circle cx="814.73" cy="322.80" r="1.0" fill="none" stroke="#747474" stroke-width="0.75"/>
<text x="693.57" y="330.00" font-size="10.28" fill="#747474" textLength="19.83" lengthAdjust="spacingAndGlyphs">+60</text>
<circle cx="717.14" cy="322.80" r="1.0" fill="none" stroke="#747474" stroke-width="0.75"/>
<text x="595.98" y="330.00" font-size="10.28" fill="#747474" textLength="19.83" lengthAdjust="spacingAndGlyphs">+90</text>
<circle cx="619.56" cy="322.80" r="1.0" fill="none" stroke="#747474" stroke-width="0.75"/>
<text x="495.33" y="330.00" font-size="10.28" fill="#747474" textLength="25.96" lengthAdjust="spacingAndGlyphs">+120</text>
<circle cx="525.05" cy="322.80" r="1.0" fill="none" stroke="#747474" stroke-width="0.75"/>
<text x="397.74" y="330.00" font-size="10.28" fill="#747474" textLength="25.96" lengthAdjust="spacingAndGlyphs">+150</text>
<circle cx="427.47" cy="322.80" r="1.0" fill="none" stroke="#747474" stroke-width="0.75"/>
<text x="300.16" y="330.00" font-size="10.28" fill="#747474" textLength="25.96" lengthAdjust="spacingAndGlyphs">+180</text>
<circle cx="329.88" cy="322.80" r="1.0" fill="none" stroke="#747474" stroke-width="0.75"/>
<text x="316.5" y="29.80" font-family="Liberation Mono" style="font-family:'Liberation Mono',monospace" font-size="13.9" fill="#fff" xml:space="preserve">US002M</text>
<text x="316.5" y="42.77" font-family="Liberation Mono" style="font-family:'Liberation Mono',monospace" font-size="13.9" fill="#fff" xml:space="preserve">Beg: 20251204 09:38:33 (sol = 252.13°)</text>
<text x="316.5" y="55.74" font-family="Liberation Mono" style="font-family:'Liberation Mono',monospace" font-size="13.9" fill="#fff" xml:space="preserve">End: 20251204 10:59:34 (sol = 252.19°)</text>
<text x="316.5" y="68.71" font-family="Liberation Mono" style="font-family:'Liberation Mono',monospace" font-size="13.9" fill="#fff" xml:space="preserve">--------------------------------------</text>
<text x="316.5" y="81.68" font-family="Liberation Mono" style="font-family:'Liberation Mono',monospace" font-size="13.9" fill="#fff" xml:space="preserve">...: 4</text>
<text x="316.5" y="94.65" font-family="Liberation Mono" style="font-family:'Liberation Mono',monospace" font-size="13.9" fill="#fff" xml:space="preserve">DKD: 1</text>
<text x="316.5" y="107.62" font-family="Liberation Mono" style="font-family:'Liberation Mono',monospace" font-size="13.9" fill="#fff" xml:space="preserve">DPC: 1</text>
<path d="M75.0 842.3 V641.7M219.0 842.3 V641.7M365.0 842.3 V641.7M506.0 842.3 V641.7M651.0 842.3 V641.7M796.7 842.3 V641.7M940.0 842.3 V641.7M1091.0 842.3 V641.7M1239.0 842.3 V641.7M1394.0 842.3 V641.7M1548.3 842.3 V641.7M1687.3 842.3 V641.7" fill="none" stroke="#5a5a5a" stroke-width="2.08" stroke-dasharray="2.08 3.44"/>
<text x="95.54" y="644.00" transform="rotate(-90.0 149.10 644.00)" font-size="29.15" fill="#484848" textLength="54.72" lengthAdjust="spacingAndGlyphs">APR</text>
<text x="239.15" y="644.00" transform="rotate(-90.0 296.00 644.00)" font-size="29.15" fill="#484848" textLength="57.48" lengthAdjust="spacingAndGlyphs">MAY</text>
<text x="388.24" y="644.00" transform="rotate(-90.0 436.20 644.00)" font-size="29.15" fill="#484848" textLength="50.00" lengthAdjust="spacingAndGlyphs">JUN</text>
<text x="531.92" y="644.00" transform="rotate(-90.0 577.20 644.00)" font-size="29.15" fill="#484848" textLength="46.08" lengthAdjust="spacingAndGlyphs">JUL</text>
<text x="668.18" y="644.00" transform="rotate(-90.0 726.00 644.00)" font-size="29.15" fill="#484848" textLength="59.81" lengthAdjust="spacingAndGlyphs">AUG</text>
<text x="823.40" y="644.00" transform="rotate(-90.0 873.30 644.00)" font-size="29.15" fill="#484848" textLength="51.20" lengthAdjust="spacingAndGlyphs">SEP</text>
<text x="960.82" y="644.00" transform="rotate(-90.0 1018.30 644.00)" font-size="29.15" fill="#484848" textLength="58.05" lengthAdjust="spacingAndGlyphs">OCT</text>
<text x="1110.80" y="644.00" transform="rotate(-90.0 1170.70 644.00)" font-size="29.15" fill="#484848" textLength="60.02" lengthAdjust="spacingAndGlyphs">NOV</text>
<text x="1264.92" y="644.00" transform="rotate(-90.0 1320.70 644.00)" font-size="29.15" fill="#484848" textLength="56.75" lengthAdjust="spacingAndGlyphs">DEC</text>
<text x="1423.33" y="644.00" transform="rotate(-90.0 1469.50 644.00)" font-size="29.15" fill="#484848" textLength="48.19" lengthAdjust="spacingAndGlyphs">JAN</text>
<text x="1579.70" y="644.00" transform="rotate(-90.0 1629.30 644.00)" font-size="29.15" fill="#484848" textLength="50.98" lengthAdjust="spacingAndGlyphs">FEB</text>
<text x="1706.25" y="644.00" transform="rotate(-90.0 1766.70 644.00)" font-size="29.15" fill="#484848" textLength="61.69" lengthAdjust="spacingAndGlyphs">MAR</text>
<path d="M106.0 834.00 H130.1M164.9 834.00 H345.0M365.8 834.00 H624.7M635.9 834.00 H787.0M807.3 834.00 H900.0M920.0 834.00 H973.0M984.2 834.00 H1065.8M1082.2 834.00 H1204.0M1244.3 834.00 H1326.0M1337.2 834.00 H1355.9M1381.1 834.00 H1443.8M1459.0 834.00 H1512.0M1523.2 834.00 H1547.0M1724.0 834.00 H1748.0M1758.1 834.00 H1781.8" stroke="#bddf26" stroke-width="4" fill="none"/>
<path d="M164.9 817.63 H188.8M224.0 817.63 H287.0M312.0 817.63 H340.8M365.8 817.63 H493.0M508.0 817.63 H653.8M703.9 817.63 H737.9M773.0 817.63 H846.0M871.0 817.63 H988.0M1003.0 817.63 H1016.7M1062.0 817.63 H1212.8M1244.3 817.63 H1267.0M1292.9 817.63 H1316.0M1342.0 817.63 H1365.0M1386.0 817.63 H1428.7M1459.0 817.63 H1482.8M1548.1 817.63 H1571.0" stroke="#81d34d" stroke-width="4" fill="none"/>
<path d="M164.9 801.26 H188.8M258.2 801.26 H488.0M508.0 801.26 H615.0M626.0 801.26 H718.0M729.0 801.26 H826.0M949.2 801.26 H1150.0M1159.9 801.26 H1247.8M1257.9 801.26 H1443.8M1459.0 801.26 H1482.8M1553.0 801.26 H1575.7" stroke="#4ec36b" stroke-width="4" fill="none"/>
<path d="M193.9 784.89 H217.9M322.2 784.89 H507.0M518.0 784.89 H542.0M557.0 784.89 H683.9M807.3 784.89 H830.9M954.2 784.89 H973.0M989.2 784.89 H1125.0M1155.2 784.89 H1218.0M1244.3 784.89 H1267.0M1317.1 784.89 H1341.0M1396.0 784.89 H1418.9M1463.7 784.89 H1650.1" stroke="#2ab07f" stroke-width="4" fill="none"/>
<path d="M341.0 768.52 H370.0M410.0 768.52 H448.0M468.8 768.52 H493.0M528.0 768.52 H545.8M562.0 768.52 H590.8M616.0 768.52 H648.7M959.2 768.52 H988.0M1062.0 768.52 H1085.8M1101.2 768.52 H1125.0M1159.9 768.52 H1194.2M1249.0 768.52 H1271.9M1425.2 768.52 H1512.0" stroke="#1e9b8a" stroke-width="4" fill="none"/>
<path d="M420.0 752.15 H443.8M533.0 752.15 H555.8M567.0 752.15 H590.8M621.0 752.15 H743.0M969.2 752.15 H1135.0M1185.3 752.15 H1346.0M1469.0 752.15 H1492.8" stroke="#25858e" stroke-width="4" fill="none"/>
<path d="M430.0 735.78 H452.8M577.0 735.78 H733.0M994.2 735.78 H1105.0M1116.2 735.78 H1222.9M1263.0 735.78 H1291.7M1489.3 735.78 H1512.0" stroke="#2d708e" stroke-width="4" fill="none"/>
<path d="M592.0 719.41 H615.0M655.2 719.41 H772.0M1072.1 719.41 H1243.2M1263.0 719.41 H1286.8" stroke="#375a8c" stroke-width="4" fill="none"/>
<path d="M595.8 703.04 H733.0M1092.2 703.04 H1120.0M1200.0 703.04 H1222.9M1273.0 703.04 H1326.0" stroke="#424086" stroke-width="4" fill="none"/>
<path d="M1110.9 686.67 H1135.1" stroke="#482475" stroke-width="4" fill="none"/>
<path d="M1256.6 842.3 V641.7" stroke="#ff0000" stroke-width="2" stroke-dasharray="5.1 2.2" fill="none"/>
<path d="M114.2 834.00 h7.5 M117.9 830.25 v7.5M240.9 834.00 h7.5 M244.7 830.25 v7.5M511.0 834.00 h7.5 M514.7 830.25 v7.5M707.1 834.00 h7.5 M710.9 830.25 v7.5M834.0 834.00 h7.5 M837.7 830.25 v7.5M962.0 834.00 h7.5 M965.8 830.25 v7.5M987.0 834.00 h7.5 M990.8 830.25 v7.5M1117.0 834.00 h7.5 M1120.7 830.25 v7.5M1296.2 834.00 h7.5 M1299.9 830.25 v7.5M1342.0 834.00 h7.5 M1345.8 830.25 v7.5M1413.2 834.00 h7.5 M1417.0 830.25 v7.5M1482.0 834.00 h7.5 M1485.8 830.25 v7.5M1531.0 834.00 h7.5 M1534.8 830.25 v7.5M1731.8 834.00 h7.5 M1735.6 830.25 v7.5M1766.0 834.00 h7.5 M1769.7 830.25 v7.5M172.8 817.63 h7.5 M176.6 813.88 v7.5M256.2 817.63 h7.5 M260.0 813.88 v7.5M324.1 817.63 h7.5 M327.9 813.88 v7.5M437.9 817.63 h7.5 M441.7 813.88 v7.5M599.0 817.63 h7.5 M602.8 813.88 v7.5M717.1 817.63 h7.5 M720.9 813.88 v7.5M793.9 817.63 h7.5 M797.6 813.88 v7.5M940.0 817.63 h7.5 M943.8 813.88 v7.5M1006.2 817.63 h7.5 M1010.0 813.88 v7.5M1153.0 817.63 h7.5 M1156.8 813.88 v7.5M1251.0 817.63 h7.5 M1254.8 813.88 v7.5M1300.0 817.63 h7.5 M1303.8 813.88 v7.5M1350.0 817.63 h7.5 M1353.7 813.88 v7.5M1403.2 817.63 h7.5 M1407.0 813.88 v7.5M1467.0 817.63 h7.5 M1470.7 813.88 v7.5M1555.2 817.63 h7.5 M1558.9 813.88 v7.5M174.9 801.26 h7.5 M178.7 797.51 v7.5M379.1 801.26 h7.5 M382.8 797.51 v7.5M545.0 801.26 h7.5 M548.7 797.51 v7.5M683.1 801.26 h7.5 M686.9 797.51 v7.5M742.1 801.26 h7.5 M745.9 797.51 v7.5M1075.0 801.26 h7.5 M1078.8 797.51 v7.5M1217.2 801.26 h7.5 M1221.0 797.51 v7.5M1305.2 801.26 h7.5 M1309.0 797.51 v7.5M1467.0 801.26 h7.5 M1470.7 797.51 v7.5M1560.2 801.26 h7.5 M1564.0 797.51 v7.5M201.9 784.89 h7.5 M205.7 781.14 v7.5M400.9 784.89 h7.5 M404.7 781.14 v7.5M526.0 784.89 h7.5 M529.7 781.14 v7.5M639.1 784.89 h7.5 M642.9 781.14 v7.5M815.0 784.89 h7.5 M818.8 781.14 v7.5M960.0 784.89 h7.5 M963.7 781.14 v7.5M1041.0 784.89 h7.5 M1044.7 781.14 v7.5M1188.0 784.89 h7.5 M1191.8 781.14 v7.5M1251.0 784.89 h7.5 M1254.8 781.14 v7.5M1325.0 784.89 h7.5 M1328.8 781.14 v7.5M1403.2 784.89 h7.5 M1407.0 781.14 v7.5M1546.2 784.89 h7.5 M1550.0 781.14 v7.5M356.1 768.52 h7.5 M359.8 764.77 v7.5M427.1 768.52 h7.5 M430.8 764.77 v7.5M477.1 768.52 h7.5 M480.8 764.77 v7.5M535.8 768.52 h7.5 M539.5 764.77 v7.5M571.0 768.52 h7.5 M574.7 764.77 v7.5M631.0 768.52 h7.5 M634.8 764.77 v7.5M974.0 768.52 h7.5 M977.8 764.77 v7.5M1070.0 768.52 h7.5 M1073.7 764.77 v7.5M1109.2 768.52 h7.5 M1113.0 764.77 v7.5M1178.0 768.52 h7.5 M1181.8 764.77 v7.5M1255.8 768.52 h7.5 M1259.5 764.77 v7.5M1467.0 768.52 h7.5 M1470.7 764.77 v7.5M427.9 752.15 h7.5 M431.7 748.40 v7.5M540.0 752.15 h7.5 M543.7 748.40 v7.5M575.0 752.15 h7.5 M578.7 748.40 v7.5M704.1 752.15 h7.5 M707.9 748.40 v7.5M1095.0 752.15 h7.5 M1098.7 748.40 v7.5M1271.0 752.15 h7.5 M1274.7 748.40 v7.5M1477.0 752.15 h7.5 M1480.7 748.40 v7.5M437.9 735.78 h7.5 M441.7 732.03 v7.5M631.0 735.78 h7.5 M634.7 732.03 v7.5M1039.0 735.78 h7.5 M1042.8 732.03 v7.5M1168.2 735.78 h7.5 M1172.0 732.03 v7.5M1275.2 735.78 h7.5 M1278.9 732.03 v7.5M1496.8 735.78 h7.5 M1500.5 732.03 v7.5M599.0 719.41 h7.5 M602.8 715.66 v7.5M727.0 719.41 h7.5 M730.7 715.66 v7.5M1188.0 719.41 h7.5 M1191.8 715.66 v7.5M1271.0 719.41 h7.5 M1274.7 715.66 v7.5M688.0 703.04 h7.5 M691.8 699.29 v7.5M1102.2 703.04 h7.5 M1106.0 699.29 v7.5M1207.2 703.04 h7.5 M1211.0 699.29 v7.5M1300.0 703.04 h7.5 M1303.8 699.29 v7.5M1118.8 686.67 h7.5 M1122.5 682.92 v7.5" stroke="#fff" stroke-width="2" fill="none"/>
<text x="106.64" y="831.70" font-size="11.77" fill="#fff" textLength="20.82" lengthAdjust="spacingAndGlyphs">KSE</text>
<text x="244.05" y="831.70" font-size="11.77" fill="#fff" textLength="20.27" lengthAdjust="spacingAndGlyphs">ETA</text>
<text x="483.60" y="831.70" font-size="11.77" fill="#fff" textLength="23.31" lengthAdjust="spacingAndGlyphs">NZC</text>
<text x="698.25" y="831.70" font-size="11.77" fill="#fff" textLength="24.01" lengthAdjust="spacingAndGlyphs">NDA</text>
<text x="843.87" y="831.70" font-size="11.77" fill="#fff" textLength="20.21" lengthAdjust="spacingAndGlyphs">SPE</text>
<text x="934.68" y="831.70" font-size="11.77" fill="#fff" textLength="23.66" lengthAdjust="spacingAndGlyphs">ARD</text>
<text x="1013.53" y="831.70" font-size="11.77" fill="#fff" textLength="22.15" lengthAdjust="spacingAndGlyphs">EGE</text>
<text x="1131.27" y="831.70" font-size="11.77" fill="#fff" textLength="21.58" lengthAdjust="spacingAndGlyphs">NTA</text>
<text x="1271.68" y="831.70" font-size="11.77" fill="#fff" textLength="26.25" lengthAdjust="spacingAndGlyphs">MON</text>
<text x="1332.03" y="831.70" font-size="11.77" fill="#fff" textLength="22.61" lengthAdjust="spacingAndGlyphs">URS</text>
<text x="1400.76" y="831.70" font-size="11.77" fill="#fff" textLength="22.91" lengthAdjust="spacingAndGlyphs">AHY</text>
<text x="1472.72" y="831.70" font-size="11.77" fill="#fff" textLength="26.10" lengthAdjust="spacingAndGlyphs">GUM</text>
<text x="1523.55" y="831.70" font-size="11.77" fill="#fff" textLength="24.05" lengthAdjust="spacingAndGlyphs">OHY</text>
<text x="1724.86" y="831.70" font-size="11.77" fill="#fff" textLength="22.68" lengthAdjust="spacingAndGlyphs">XHE</text>
<text x="1760.68" y="831.70" font-size="11.77" fill="#fff" textLength="17.55" lengthAdjust="spacingAndGlyphs">EVI</text>
<text x="165.87" y="815.33" font-size="11.77" fill="#fff" textLength="21.84" lengthAdjust="spacingAndGlyphs">AVB</text>
<text x="245.26" y="815.33" font-size="11.77" fill="#fff" textLength="18.48" lengthAdjust="spacingAndGlyphs">ELY</text>
<text x="311.72" y="815.33" font-size="11.77" fill="#fff" textLength="24.70" lengthAdjust="spacingAndGlyphs">CAM</text>
<text x="420.68" y="815.33" font-size="11.77" fill="#fff" textLength="22.33" lengthAdjust="spacingAndGlyphs">SSG</text>
<text x="567.21" y="815.33" font-size="11.77" fill="#fff" textLength="21.75" lengthAdjust="spacingAndGlyphs">PCA</text>
<text x="708.83" y="815.33" font-size="11.77" fill="#fff" textLength="24.06" lengthAdjust="spacingAndGlyphs">AUD</text>
<text x="797.78" y="815.33" font-size="11.77" fill="#fff" textLength="23.52" lengthAdjust="spacingAndGlyphs">AUR</text>
<text x="919.32" y="815.33" font-size="11.77" fill="#fff" textLength="22.88" lengthAdjust="spacingAndGlyphs">DSX</text>
<text x="998.78" y="815.33" font-size="11.77" fill="#fff" textLength="24.37" lengthAdjust="spacingAndGlyphs">OCU</text>
<text x="1126.53" y="815.33" font-size="11.77" fill="#fff" textLength="23.53" lengthAdjust="spacingAndGlyphs">OER</text>
<text x="1242.67" y="815.33" font-size="11.77" fill="#fff" textLength="24.09" lengthAdjust="spacingAndGlyphs">DKD</text>
<text x="1292.29" y="815.33" font-size="11.77" fill="#fff" textLength="22.97" lengthAdjust="spacingAndGlyphs">DSV</text>
<text x="1343.78" y="815.33" font-size="11.77" fill="#fff" textLength="19.26" lengthAdjust="spacingAndGlyphs">ALY</text>
<text x="1399.27" y="815.33" font-size="11.77" fill="#fff" textLength="16.94" lengthAdjust="spacingAndGlyphs">JLE</text>
<text x="1460.72" y="815.33" font-size="11.77" fill="#fff" textLength="22.08" lengthAdjust="spacingAndGlyphs">SCC</text>
<text x="1548.43" y="815.33" font-size="11.77" fill="#fff" textLength="20.75" lengthAdjust="spacingAndGlyphs">FEV</text>
<text x="166.53" y="798.96" font-size="11.77" fill="#fff" textLength="19.08" lengthAdjust="spacingAndGlyphs">LYR</text>
<text x="362.25" y="798.96" font-size="11.77" fill="#fff" textLength="21.13" lengthAdjust="spacingAndGlyphs">JMC</text>
<text x="550.02" y="798.96" font-size="11.77" fill="#fff" textLength="17.41" lengthAdjust="spacingAndGlyphs">JPE</text>
<text x="660.60" y="798.96" font-size="11.77" fill="#fff" textLength="21.34" lengthAdjust="spacingAndGlyphs">PAU</text>
<text x="764.29" y="798.96" font-size="11.77" fill="#fff" textLength="18.94" lengthAdjust="spacingAndGlyphs">NIA</text>
<text x="1039.38" y="798.96" font-size="11.77" fill="#fff" textLength="20.28" lengthAdjust="spacingAndGlyphs">STA</text>
<text x="1193.46" y="798.96" font-size="11.77" fill="#fff" textLength="25.52" lengthAdjust="spacingAndGlyphs">NOO</text>
<text x="1340.85" y="798.96" font-size="11.77" fill="#fff" textLength="25.84" lengthAdjust="spacingAndGlyphs">COM</text>
<text x="1458.66" y="798.96" font-size="11.77" fill="#fff" textLength="23.40" lengthAdjust="spacingAndGlyphs">NCC</text>
<text x="1553.42" y="798.96" font-size="11.77" fill="#fff" textLength="21.61" lengthAdjust="spacingAndGlyphs">FED</text>
<text x="196.67" y="782.59" font-size="11.77" fill="#fff" textLength="18.97" lengthAdjust="spacingAndGlyphs">HVI</text>
<text x="403.09" y="782.59" font-size="11.77" fill="#fff" textLength="18.42" lengthAdjust="spacingAndGlyphs">ARI</text>
<text x="518.76" y="782.59" font-size="11.77" fill="#fff" textLength="22.00" lengthAdjust="spacingAndGlyphs">SZC</text>
<text x="607.43" y="782.59" font-size="11.77" fill="#fff" textLength="22.15" lengthAdjust="spacingAndGlyphs">CAP</text>
<text x="806.59" y="782.59" font-size="11.77" fill="#fff" textLength="22.99" lengthAdjust="spacingAndGlyphs">NUE</text>
<text x="949.35" y="782.59" font-size="11.77" fill="#fff" textLength="23.43" lengthAdjust="spacingAndGlyphs">OCT</text>
<text x="1049.79" y="782.59" font-size="11.77" fill="#fff" textLength="19.52" lengthAdjust="spacingAndGlyphs">ORI</text>
<text x="1173.79" y="782.59" font-size="11.77" fill="#fff" textLength="25.77" lengthAdjust="spacingAndGlyphs">AMO</text>
<text x="1243.79" y="782.59" font-size="11.77" fill="#fff" textLength="22.56" lengthAdjust="spacingAndGlyphs">DPC</text>
<text x="1320.40" y="782.59" font-size="11.77" fill="#fff" textLength="18.37" lengthAdjust="spacingAndGlyphs">XVI</text>
<text x="1395.20" y="782.59" font-size="11.77" fill="#fff" textLength="24.31" lengthAdjust="spacingAndGlyphs">QUA</text>
<text x="1547.99" y="782.59" font-size="11.77" fill="#fff" textLength="23.52" lengthAdjust="spacingAndGlyphs">AAN</text>
<text x="342.25" y="766.22" font-size="11.77" fill="#fff" textLength="21.99" lengthAdjust="spacingAndGlyphs">TAH</text>
<text x="421.95" y="766.22" font-size="11.77" fill="#fff" textLength="18.57" lengthAdjust="spacingAndGlyphs">JEA</text>
<text x="474.32" y="766.22" font-size="11.77" fill="#fff" textLength="14.12" lengthAdjust="spacingAndGlyphs">JIP</text>
<text x="528.64" y="766.22" font-size="11.77" fill="#fff" textLength="19.96" lengthAdjust="spacingAndGlyphs">PPS</text>
<text x="567.76" y="766.22" font-size="11.77" fill="#fff" textLength="22.14" lengthAdjust="spacingAndGlyphs">ZCS</text>
<text x="620.21" y="766.22" font-size="11.77" fill="#fff" textLength="25.01" lengthAdjust="spacingAndGlyphs">GDR</text>
<text x="959.20" y="766.22" font-size="11.77" fill="#fff" textLength="23.15" lengthAdjust="spacingAndGlyphs">DRA</text>
<text x="1061.83" y="766.22" font-size="11.77" fill="#fff" textLength="22.96" lengthAdjust="spacingAndGlyphs">LUM</text>
<text x="1101.81" y="766.22" font-size="11.77" fill="#fff" textLength="22.12" lengthAdjust="spacingAndGlyphs">RPU</text>
<text x="1165.72" y="766.22" font-size="11.77" fill="#fff" textLength="22.96" lengthAdjust="spacingAndGlyphs">THA</text>
<text x="1248.75" y="766.22" font-size="11.77" fill="#fff" textLength="21.44" lengthAdjust="spacingAndGlyphs">PSU</text>
<text x="1459.92" y="766.22" font-size="11.77" fill="#fff" textLength="21.87" lengthAdjust="spacingAndGlyphs">XCB</text>
<text x="422.27" y="749.85" font-size="11.77" fill="#fff" textLength="18.67" lengthAdjust="spacingAndGlyphs">JRC</text>
<text x="532.77" y="749.85" font-size="11.77" fill="#fff" textLength="23.38" lengthAdjust="spacingAndGlyphs">CAN</text>
<text x="567.50" y="749.85" font-size="11.77" fill="#fff" textLength="20.80" lengthAdjust="spacingAndGlyphs">FAN</text>
<text x="670.25" y="749.85" font-size="11.77" fill="#fff" textLength="21.32" lengthAdjust="spacingAndGlyphs">PER</text>
<text x="1039.36" y="749.85" font-size="11.77" fill="#fff" textLength="21.15" lengthAdjust="spacingAndGlyphs">CTA</text>
<text x="1253.54" y="749.85" font-size="11.77" fill="#fff" textLength="23.35" lengthAdjust="spacingAndGlyphs">HYD</text>
<text x="1469.07" y="749.85" font-size="11.77" fill="#fff" textLength="25.10" lengthAdjust="spacingAndGlyphs">XUM</text>
<text x="429.31" y="733.48" font-size="11.77" fill="#fff" textLength="24.32" lengthAdjust="spacingAndGlyphs">COR</text>
<text x="646.50" y="733.48" font-size="11.77" fill="#fff" textLength="22.71" lengthAdjust="spacingAndGlyphs">SDA</text>
<text x="1039.56" y="733.48" font-size="11.77" fill="#fff" textLength="18.78" lengthAdjust="spacingAndGlyphs">LMI</text>
<text x="1155.71" y="733.48" font-size="11.77" fill="#fff" textLength="21.65" lengthAdjust="spacingAndGlyphs">LEO</text>
<text x="1263.38" y="733.48" font-size="11.77" fill="#fff" textLength="22.21" lengthAdjust="spacingAndGlyphs">EHY</text>
<text x="1489.44" y="733.48" font-size="11.77" fill="#fff" textLength="22.10" lengthAdjust="spacingAndGlyphs">ECV</text>
<text x="593.85" y="717.11" font-size="11.77" fill="#fff" textLength="19.15" lengthAdjust="spacingAndGlyphs">JXA</text>
<text x="704.73" y="717.11" font-size="11.77" fill="#fff" textLength="22.65" lengthAdjust="spacingAndGlyphs">KCG</text>
<text x="1144.84" y="717.11" font-size="11.77" fill="#fff" textLength="24.26" lengthAdjust="spacingAndGlyphs">AND</text>
<text x="1262.69" y="717.11" font-size="11.77" fill="#fff" textLength="24.23" lengthAdjust="spacingAndGlyphs">DAD</text>
<text x="657.63" y="700.74" font-size="11.77" fill="#fff" textLength="17.64" lengthAdjust="spacingAndGlyphs">ERI</text>
<text x="1097.59" y="700.74" font-size="11.77" fill="#fff" textLength="21.45" lengthAdjust="spacingAndGlyphs">SLD</text>
<text x="1199.58" y="700.74" font-size="11.77" fill="#fff" textLength="23.24" lengthAdjust="spacingAndGlyphs">ORS</text>
<text x="1287.79" y="700.74" font-size="11.77" fill="#fff" textLength="24.96" lengthAdjust="spacingAndGlyphs">GEM</text>
<text x="1110.86" y="684.37" font-size="11.77" fill="#fff" textLength="24.28" lengthAdjust="spacingAndGlyphs">KUM</text>
<rect x="20.5" y="641.5" width="1765" height="201" fill="none" stroke="#fff" stroke-width="1.15"/>
<path d="M20.40 842.3 v5M265.57 842.3 v5M510.73 842.3 v5M755.90 842.3 v5M1001.07 842.3 v5M1246.23 842.3 v5M1491.40 842.3 v5M1736.57 842.3 v5" stroke="#fff" stroke-width="1.1"/>
<text x="16.34" y="862.00" font-size="13.90" fill="#fff" textLength="8.13" lengthAdjust="spacingAndGlyphs">0</text>
<text x="257.09" y="862.00" font-size="13.90" fill="#fff" textLength="16.96" lengthAdjust="spacingAndGlyphs">50</text>
<text x="497.51" y="862.00" font-size="13.90" fill="#fff" textLength="25.88" lengthAdjust="spacingAndGlyphs">100</text>
<text x="742.68" y="862.00" font-size="13.90" fill="#fff" textLength="25.88" lengthAdjust="spacingAndGlyphs">150</text>
<text x="987.99" y="862.00" font-size="13.90" fill="#fff" textLength="25.98" lengthAdjust="spacingAndGlyphs">200</text>
<text x="1233.15" y="862.00" font-size="13.90" fill="#fff" textLength="25.98" lengthAdjust="spacingAndGlyphs">250</text>
<text x="1478.54" y="862.00" font-size="13.90" fill="#fff" textLength="25.74" lengthAdjust="spacingAndGlyphs">300</text>
<text x="1723.70" y="862.00" font-size="13.90" fill="#fff" textLength="25.74" lengthAdjust="spacingAndGlyphs">350</text>
<text x="829.54" y="882.10" font-size="14.73" fill="#fff" textLength="146.38" lengthAdjust="spacingAndGlyphs">Solar longitude (deg)</text>
</svg></body></html>
